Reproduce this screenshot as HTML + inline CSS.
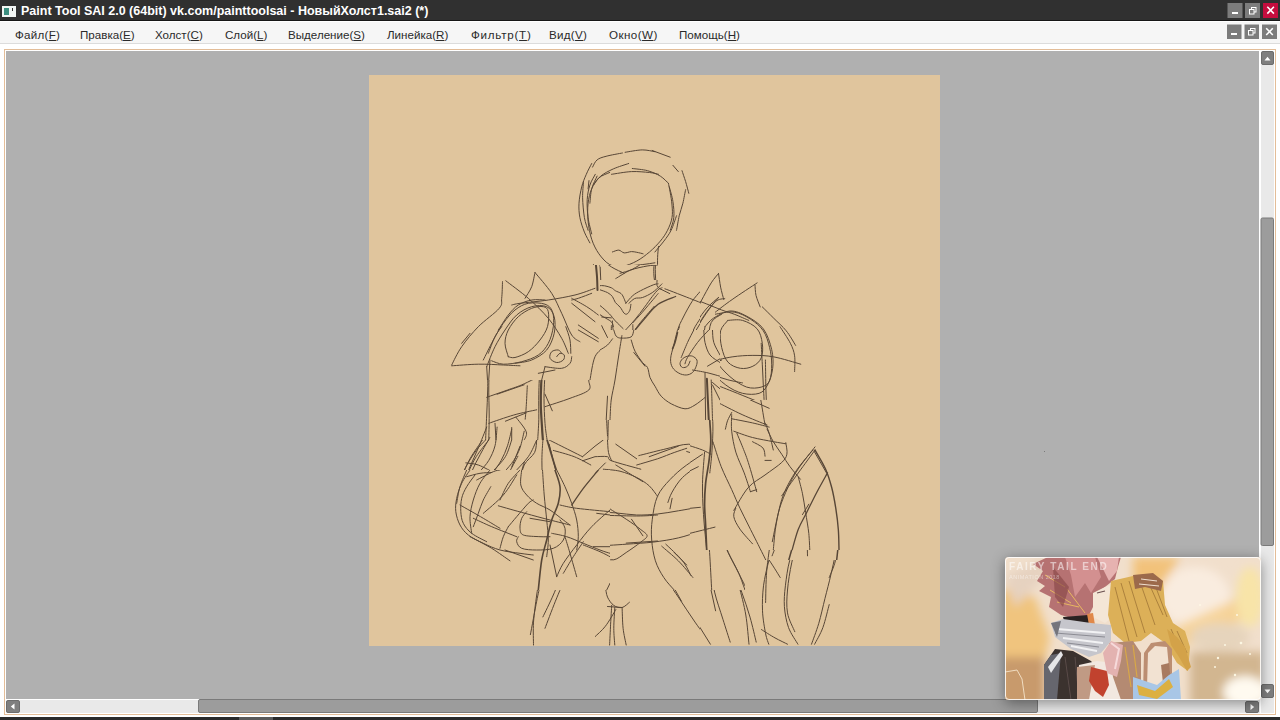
<!DOCTYPE html>
<html><head><meta charset="utf-8">
<style>
*{margin:0;padding:0;box-sizing:border-box}
html,body{width:1280px;height:720px;overflow:hidden;background:#fff;font-family:"Liberation Sans",sans-serif}
.abs{position:absolute}
#title{left:0;top:0;width:1280px;height:21px;background:#303030;border-bottom:1px solid #161616}
#title .t{left:21px;top:4px;font-size:12.5px;font-weight:bold;color:#fff;white-space:nowrap}
#icon{left:2px;top:6px;width:14px;height:11px;background:#f2f6f4}
#icon i{position:absolute;left:2px;top:2px;width:5px;height:7px;background:#3d8f80}
#icon b{position:absolute;left:10px;top:2px;width:1px;height:3px;background:#333}
.wb{width:15px;height:15px;background:#7c7c7c}
#menu{left:0;top:21px;width:1280px;height:23px;background:#f6f6f6;border-top:1px solid #fff;border-bottom:1px solid #dcdcdc}
.mi{top:6px;font-size:11.6px;color:#2a2a2a;white-space:nowrap}
.mi u{text-decoration:underline;text-underline-offset:1px}
#frame{left:4px;top:49px;width:1272px;height:666px;border:1px solid #e3bd98;background:#fff}
#view{left:6px;top:51px;width:1253px;height:648px;background:#b0b0b0}
#paper{left:369px;top:75px;width:571px;height:571px;background:#e0c59d}
#vtrack{left:1260px;top:51px;width:14px;height:662px;background:#e9e9e9;border-left:1px solid #fff}
#htrack{left:6px;top:699px;width:1254px;height:14px;background:#e9e9e9;border-top:1px solid #fff}
.sbtn{width:13px;height:14px;background:#7d7d7d;border:1px solid #6a6a6a;border-radius:2px}
.thumb{background:#9a9a9a;border:1px solid #7a7a7a;border-radius:2px}
#bottombar{left:0;top:717px;width:1280px;height:3px;background:#2a2a2a}
</style></head><body>
<div id="title" class="abs">
  <div id="icon" class="abs"><i></i><b></b></div>
  <div class="t abs">Paint Tool SAI 2.0 (64bit) vk.com/painttoolsai - НовыйХолст1.sai2 (*)</div>
</div>

<div id="menu" class="abs">
  <div class="mi abs" style="left:15px;letter-spacing:0.25px">Файл(<u>F</u>)</div>
  <div class="mi abs" style="left:80px">Правка(<u>E</u>)</div>
  <div class="mi abs" style="left:155px">Холст(<u>C</u>)</div>
  <div class="mi abs" style="left:225px">Слой(<u>L</u>)</div>
  <div class="mi abs" style="left:288px">Выделение(<u>S</u>)</div>
  <div class="mi abs" style="left:387px">Линейка(<u>R</u>)</div>
  <div class="mi abs" style="left:471px;letter-spacing:0.75px">Фильтр(<u>T</u>)</div>
  <div class="mi abs" style="left:549px;letter-spacing:0.3px">Вид(<u>V</u>)</div>
  <div class="mi abs" style="left:609px;letter-spacing:0.45px">Окно(<u>W</u>)</div>
  <div class="mi abs" style="left:679px">Помощь(<u>H</u>)</div>
</div>
<svg class="abs" style="left:0;top:0" width="1280" height="45">
  <rect x="1227.5" y="3" width="15" height="15" fill="#7c7c7c"/>
  <rect x="1232" y="12" width="6" height="2" fill="#fff"/>
  <rect x="1245" y="3" width="15" height="15" fill="#7c7c7c"/>
  <rect x="1251.5" y="7.5" width="4.5" height="4.5" fill="none" stroke="#fff" stroke-width="1"/>
  <rect x="1249.5" y="9.5" width="4.5" height="4.5" fill="#7c7c7c" stroke="#fff" stroke-width="1"/>
  <rect x="1263" y="3" width="15" height="15" fill="#c50d3e"/>
  <path d="M1267.3 6.8L1273.9 13.6M1273.9 6.8L1267.3 13.6" stroke="#fff" stroke-width="1.6"/>
  <rect x="1227" y="24.5" width="14.5" height="14.5" fill="#7c7c7c"/>
  <rect x="1231" y="33" width="6" height="2" fill="#fff"/>
  <rect x="1244.5" y="24.5" width="14.5" height="14.5" fill="#7c7c7c"/>
  <rect x="1250.5" y="28.5" width="4.5" height="4.5" fill="none" stroke="#fff" stroke-width="1"/>
  <rect x="1248.5" y="30.5" width="4.5" height="4.5" fill="#7c7c7c" stroke="#fff" stroke-width="1"/>
  <rect x="1262" y="24.5" width="15" height="14.5" fill="#7c7c7c"/>
  <path d="M1266.2 28.2L1272.8 35M1272.8 28.2L1266.2 35" stroke="#fff" stroke-width="1.6"/>
</svg>
<div id="frame" class="abs"></div>
<div id="view" class="abs"></div>
<div id="paper" class="abs"></div>
<div class="abs" style="left:1044px;top:451px;width:1px;height:1px;background:#7a7a7a"></div>
<svg class="abs" style="left:0;top:0" width="1280" height="720" viewBox="0 0 1280 720"><defs><mask id="c0" maskUnits="userSpaceOnUse" x="0" y="0" width="1280" height="720"><polygon fill="white" points="369,140 595,140 595,290 369,290"/><polygon fill="black" points="590,280 700,280 700,350 590,350"/><polygon fill="black" points="600,330 720,330 720,420 600,420"/><polygon fill="black" points="369,260 600,260 600,380 369,380"/><polygon fill="black" points="570,140 700,140 700,265 570,265"/><polygon fill="black" points="450,470 610,470 610,590 450,590"/></mask><mask id="c1" maskUnits="userSpaceOnUse" x="0" y="0" width="1280" height="720"><polygon fill="white" points="595,140 745,140 745,260 680,260 680,290 595,290"/><polygon fill="black" points="590,280 700,280 700,350 590,350"/><polygon fill="black" points="600,330 720,330 720,420 600,420"/><polygon fill="black" points="369,260 600,260 600,380 369,380"/><polygon fill="black" points="570,140 700,140 700,265 570,265"/><polygon fill="black" points="450,470 610,470 610,590 450,590"/></mask><mask id="c2" maskUnits="userSpaceOnUse" x="0" y="0" width="1280" height="720"><polygon fill="white" points="745,140 940,140 940,410 840,410 840,400 830,400 830,260 745,260"/><polygon fill="black" points="590,280 700,280 700,350 590,350"/><polygon fill="black" points="600,330 720,330 720,420 600,420"/><polygon fill="black" points="369,260 600,260 600,380 369,380"/><polygon fill="black" points="570,140 700,140 700,265 570,265"/><polygon fill="black" points="450,470 610,470 610,590 450,590"/></mask><mask id="c3" maskUnits="userSpaceOnUse" x="0" y="0" width="1280" height="720"><polygon fill="white" points="369,290 595,290 595,440 369,440"/><polygon fill="black" points="590,280 700,280 700,350 590,350"/><polygon fill="black" points="600,330 720,330 720,420 600,420"/><polygon fill="black" points="369,260 600,260 600,380 369,380"/><polygon fill="black" points="570,140 700,140 700,265 570,265"/><polygon fill="black" points="450,470 610,470 610,590 450,590"/></mask><mask id="c4" maskUnits="userSpaceOnUse" x="0" y="0" width="1280" height="720"><polygon fill="white" points="595,290 680,290 680,410 690,410 690,440 595,440"/><polygon fill="black" points="590,280 700,280 700,350 590,350"/><polygon fill="black" points="600,330 720,330 720,420 600,420"/><polygon fill="black" points="369,260 600,260 600,380 369,380"/><polygon fill="black" points="570,140 700,140 700,265 570,265"/><polygon fill="black" points="450,470 610,470 610,590 450,590"/></mask><mask id="c5" maskUnits="userSpaceOnUse" x="0" y="0" width="1280" height="720"><polygon fill="white" points="369,440 595,440 595,590 369,590"/><polygon fill="black" points="590,280 700,280 700,350 590,350"/><polygon fill="black" points="600,330 720,330 720,420 600,420"/><polygon fill="black" points="369,260 600,260 600,380 369,380"/><polygon fill="black" points="570,140 700,140 700,265 570,265"/><polygon fill="black" points="450,470 610,470 610,590 450,590"/></mask><mask id="c6" maskUnits="userSpaceOnUse" x="0" y="0" width="1280" height="720"><polygon fill="white" points="595,440 690,440 690,550 745,550 745,590 595,590"/><polygon fill="black" points="590,280 700,280 700,350 590,350"/><polygon fill="black" points="600,330 720,330 720,420 600,420"/><polygon fill="black" points="369,260 600,260 600,380 369,380"/><polygon fill="black" points="570,140 700,140 700,265 570,265"/><polygon fill="black" points="450,470 610,470 610,590 450,590"/></mask><mask id="c7" maskUnits="userSpaceOnUse" x="0" y="0" width="1280" height="720"><polygon fill="white" points="840,410 940,410 940,560 745,560 745,550 840,550"/><polygon fill="black" points="590,280 700,280 700,350 590,350"/><polygon fill="black" points="600,330 720,330 720,420 600,420"/><polygon fill="black" points="369,260 600,260 600,380 369,380"/><polygon fill="black" points="570,140 700,140 700,265 570,265"/><polygon fill="black" points="450,470 610,470 610,590 450,590"/></mask><mask id="c8" maskUnits="userSpaceOnUse" x="0" y="0" width="1280" height="720"><polygon fill="white" points="369,590 595,590 595,650 369,650"/><polygon fill="black" points="590,280 700,280 700,350 590,350"/><polygon fill="black" points="600,330 720,330 720,420 600,420"/><polygon fill="black" points="369,260 600,260 600,380 369,380"/><polygon fill="black" points="570,140 700,140 700,265 570,265"/><polygon fill="black" points="450,470 610,470 610,590 450,590"/></mask><mask id="c9" maskUnits="userSpaceOnUse" x="0" y="0" width="1280" height="720"><polygon fill="white" points="595,590 700,590 700,650 595,650"/><polygon fill="black" points="590,280 700,280 700,350 590,350"/><polygon fill="black" points="600,330 720,330 720,420 600,420"/><polygon fill="black" points="369,260 600,260 600,380 369,380"/><polygon fill="black" points="570,140 700,140 700,265 570,265"/><polygon fill="black" points="450,470 610,470 610,590 450,590"/></mask><mask id="c10" maskUnits="userSpaceOnUse" x="0" y="0" width="1280" height="720"><polygon fill="white" points="700,590 745,590 745,560 940,560 940,650 700,650"/><polygon fill="black" points="590,280 700,280 700,350 590,350"/><polygon fill="black" points="600,330 720,330 720,420 600,420"/><polygon fill="black" points="369,260 600,260 600,380 369,380"/><polygon fill="black" points="570,140 700,140 700,265 570,265"/><polygon fill="black" points="450,470 610,470 610,590 450,590"/></mask><mask id="c11" maskUnits="userSpaceOnUse" x="0" y="0" width="1280" height="720"><polygon fill="white" points="680,260 830,260 830,400 690,400 690,410 680,410"/><polygon fill="black" points="590,280 700,280 700,350 590,350"/><polygon fill="black" points="600,330 720,330 720,420 600,420"/><polygon fill="black" points="369,260 600,260 600,380 369,380"/><polygon fill="black" points="570,140 700,140 700,265 570,265"/><polygon fill="black" points="450,470 610,470 610,590 450,590"/></mask><mask id="c12" maskUnits="userSpaceOnUse" x="0" y="0" width="1280" height="720"><polygon fill="white" points="690,400 840,400 840,550 690,550"/><polygon fill="black" points="590,280 700,280 700,350 590,350"/><polygon fill="black" points="600,330 720,330 720,420 600,420"/><polygon fill="black" points="369,260 600,260 600,380 369,380"/><polygon fill="black" points="570,140 700,140 700,265 570,265"/><polygon fill="black" points="450,470 610,470 610,590 450,590"/></mask><mask id="c13" maskUnits="userSpaceOnUse" x="0" y="0" width="1280" height="720"><polygon fill="white" points="369,75 940,75 940,646 369,646"/><polygon fill="black" points="590,280 700,280 700,350 590,350"/><polygon fill="black" points="600,330 720,330 720,420 600,420"/><polygon fill="black" points="369,260 600,260 600,380 369,380"/><polygon fill="black" points="570,140 700,140 700,265 570,265"/><polygon fill="black" points="450,470 610,470 610,590 450,590"/></mask><mask id="c14" maskUnits="userSpaceOnUse" x="0" y="0" width="1280" height="720"><polygon fill="white" points="590,280 700,280 700,350 590,350"/><polygon fill="black" points="600,330 720,330 720,420 600,420"/><polygon fill="black" points="369,260 600,260 600,380 369,380"/><polygon fill="black" points="570,140 700,140 700,265 570,265"/><polygon fill="black" points="450,470 610,470 610,590 450,590"/></mask><mask id="c15" maskUnits="userSpaceOnUse" x="0" y="0" width="1280" height="720"><polygon fill="white" points="600,330 720,330 720,420 600,420"/><polygon fill="black" points="369,260 600,260 600,380 369,380"/><polygon fill="black" points="570,140 700,140 700,265 570,265"/><polygon fill="black" points="450,470 610,470 610,590 450,590"/></mask><mask id="c16" maskUnits="userSpaceOnUse" x="0" y="0" width="1280" height="720"><polygon fill="white" points="369,260 600,260 600,380 369,380"/><polygon fill="black" points="570,140 700,140 700,265 570,265"/><polygon fill="black" points="450,470 610,470 610,590 450,590"/></mask><mask id="c17" maskUnits="userSpaceOnUse" x="0" y="0" width="1280" height="720"><polygon fill="white" points="570,140 700,140 700,265 570,265"/><polygon fill="black" points="450,470 610,470 610,590 450,590"/></mask><mask id="c18" maskUnits="userSpaceOnUse" x="0" y="0" width="1280" height="720"><polygon fill="white" points="450,470 610,470 610,590 450,590"/></mask><clipPath id="paperclip"><rect x="369" y="75" width="571" height="571"/></clipPath></defs><g clip-path="url(#paperclip)" fill="none" stroke="#574636" stroke-linecap="round" stroke-linejoin="round"><g mask="url(#c0)"><path d="M591.9 164.0C591.0 164.8 588.2 166.6 586.7 169.2C585.1 171.8 583.7 175.4 582.5 179.6C581.3 183.8 580.0 189.3 579.4 194.2C578.8 199.0 578.6 203.9 578.8 208.8C578.9 213.6 579.3 218.8 580.4 223.3C581.6 227.8 583.9 232.4 585.6 235.8C587.4 239.3 589.3 242.1 590.8 244.2C592.4 246.3 594.3 247.6 595.0 248.3 M595.0 169.2C594.3 170.6 592.2 174.0 590.8 177.5C589.4 181.0 587.7 185.8 586.7 190.0C585.6 194.2 584.8 197.6 584.6 202.5C584.4 207.4 584.6 214.3 585.6 219.2C586.7 224.0 589.3 228.5 590.8 231.7C592.4 234.8 594.3 236.9 595.0 237.9 M588.8 179.6L587.7 187.9 M595.0 181.7C594.3 183.8 591.9 189.7 590.8 194.2C589.8 198.7 588.6 203.9 588.8 208.8C588.9 213.6 591.4 220.9 591.9 223.3 M502.9 281.2L503.3 290.0 M505.4 280.6L515.8 290.0 M534.2 271.7C533.9 273.0 533.1 276.5 532.5 279.6C531.9 282.6 530.8 288.3 530.4 290.0 M534.2 271.7C535.6 273.3 540.4 278.6 542.9 281.7C545.4 284.7 548.1 288.6 549.2 290.0" stroke-width="1.0"/><path d="M594.0 262.9C594.1 265.0 594.8 270.9 595.0 275.4C595.2 279.9 595.3 287.6 595.4 290.0" stroke-width="2.0"/></g><g mask="url(#c1)"><path d="M595.0 162.9C596.7 162.2 600.6 160.0 605.4 158.3C610.3 156.7 617.9 154.2 624.2 152.9C630.4 151.6 637.4 150.4 642.9 150.4C648.5 150.4 653.0 151.7 657.5 152.9C662.0 154.1 667.9 156.9 670.0 157.7 M672.5 165.0L678.3 171.2 M680.8 170.2C681.5 171.9 683.3 176.8 684.6 180.6C685.9 184.4 688.1 191.0 688.8 193.1 M685.6 190.0C685.1 192.1 683.5 198.3 682.5 202.5C681.5 206.7 680.4 210.5 679.4 215.0C678.3 219.5 676.8 227.2 676.2 229.6 M595.0 183.8C596.4 182.2 599.9 177.0 603.3 174.4C606.8 171.8 611.7 170.0 615.8 168.1C620.0 166.3 626.2 164.1 628.3 163.3 M607.5 174.4C611.7 173.5 624.2 169.3 632.5 169.2C640.8 169.0 653.3 172.6 657.5 173.3 M632.5 169.2C635.6 169.9 646.0 171.6 651.2 173.3C656.5 175.1 660.6 177.3 663.8 179.6C666.9 181.8 669.0 185.7 670.0 186.9 M667.9 183.8C668.4 185.5 670.2 190.0 671.0 194.2C671.9 198.3 673.0 203.9 673.1 208.8C673.3 213.6 673.1 218.8 672.1 223.3C671.0 227.8 669.3 231.7 666.9 235.8C664.4 240.0 661.1 244.2 657.5 248.3C653.9 252.5 649.2 257.4 645.0 260.8C640.8 264.3 636.7 267.1 632.5 269.2C628.3 271.2 622.1 272.6 620.0 273.3 M669.0 187.9C669.5 190.3 672.2 197.3 672.5 202.5C672.8 207.7 672.5 213.3 671.0 219.2C669.6 225.1 665.0 234.8 663.8 237.9 M595.0 250.4C596.0 251.8 598.5 256.0 601.2 258.8C604.0 261.5 607.8 264.7 611.7 267.1C615.5 269.5 622.1 272.3 624.2 273.3 M615.8 278.5C618.3 277.2 625.2 272.3 630.4 270.2C635.6 268.1 642.6 266.9 647.1 266.0C651.6 265.2 655.8 265.2 657.5 265.0 M611.7 252.5C612.4 252.2 614.1 250.6 615.8 250.4C617.6 250.2 620.3 250.9 622.1 251.5C623.8 252.0 624.5 253.5 626.2 253.5C628.0 253.5 629.7 251.5 632.5 251.5C635.3 251.5 641.2 253.2 642.9 253.5 M657.5 248.3C657.2 251.1 655.7 259.4 655.4 265.0C655.1 270.6 655.5 277.5 655.8 281.7C656.2 285.8 657.2 288.6 657.5 290.0 M654.4 256.7C654.3 259.4 653.6 268.5 653.8 273.3C653.9 278.2 655.1 283.8 655.4 285.8 M600.2 267.1L600.8 281.7 M703.3 290.0C706.1 287.2 716.9 273.3 720.0 273.3C723.1 273.3 721.7 287.2 722.1 290.0 M645.0 290.0L655.4 283.8 M595.0 285.8C596.4 285.7 600.6 284.1 603.3 284.8C606.1 285.5 610.3 289.1 611.7 290.0" stroke-width="1.0"/><path d="M597.1 260.8C596.9 263.3 596.0 270.6 596.0 275.4C596.0 280.3 596.9 287.6 597.1 290.0" stroke-width="2.5"/></g><g mask="url(#c2)"><path d="M745.0 291.2L757.5 282.5 M754.4 286.0C754.7 288.0 755.4 294.0 756.5 297.5C757.5 301.0 759.9 305.3 760.6 306.9 M762.7 306.9C765.0 309.1 772.3 316.4 776.2 320.4C780.2 324.4 783.5 326.7 786.7 330.8C789.8 335.0 793.6 343.0 795.0 345.4 M780.4 326.7C781.8 329.1 786.5 336.7 788.8 341.2C791.0 345.8 792.9 348.7 794.0 353.8C795.0 358.8 794.8 368.5 795.0 371.5 M745.0 316.2C746.7 318.0 752.6 322.8 755.4 326.7C758.2 330.5 760.6 335.0 761.7 339.2C762.7 343.3 762.4 348.2 761.7 351.7C761.0 355.1 759.2 357.9 757.5 360.0C755.8 362.1 753.3 363.3 751.2 364.2C749.2 365.0 746.0 365.0 745.0 365.2 M745.0 320.4C747.1 322.2 754.0 327.0 757.5 330.8C761.0 334.7 763.6 338.8 765.8 343.3C768.1 347.8 770.3 352.7 771.0 357.9C771.7 363.1 771.2 369.4 770.0 374.6C768.8 379.8 766.5 385.7 763.8 389.2C761.0 392.6 756.5 394.0 753.3 395.4C750.2 396.8 746.4 397.2 745.0 397.5 M745.0 328.8C747.4 330.5 755.8 334.7 759.6 339.2C763.4 343.7 765.8 351.0 767.9 355.8C770.0 360.7 771.7 363.5 772.1 368.3C772.4 373.2 771.7 380.8 770.0 385.0C768.3 389.2 763.1 391.9 761.7 393.3 M745.0 355.8C748.5 355.8 758.9 355.1 765.8 355.8C772.8 356.5 780.8 358.6 786.7 360.0C792.6 361.4 798.8 363.5 801.2 364.2 M761.7 343.3C761.8 348.5 762.4 363.5 762.7 374.6C763.1 385.7 763.6 404.1 763.8 410.0 M765.8 353.8L765.8 395.4 M745.0 385.0C747.1 386.4 754.0 390.6 757.5 393.3C761.0 396.1 764.4 400.3 765.8 401.7 M745.0 397.5L767.9 407.9" stroke-width="1.0"/></g><g mask="url(#c3)"><path d="M501.2 290.0C501.2 292.1 501.4 299.4 500.8 302.5C500.3 305.6 500.5 306.3 498.1 308.8C495.8 311.2 491.0 313.3 486.7 317.1C482.3 320.9 476.6 326.1 472.1 331.7C467.6 337.2 462.9 344.9 459.6 350.4C456.3 356.0 453.5 362.6 452.3 365.0 M482.5 319.2L470.0 333.8 M452.3 366.0C455.2 365.8 463.6 365.0 470.0 364.6C476.4 364.1 484.6 363.3 490.8 363.3C497.1 363.4 502.6 364.5 507.5 365.0C512.4 365.5 517.9 365.9 520.0 366.0 M515.8 290.0C518.6 292.1 527.6 298.0 532.5 302.5C537.4 307.0 540.8 311.9 545.0 317.1C549.2 322.3 554.0 328.5 557.5 333.8C561.0 339.0 563.8 344.5 565.8 348.3C567.9 352.2 569.3 355.3 570.0 356.7 M549.2 290.0C551.2 292.8 557.8 300.8 561.7 306.7C565.5 312.6 569.0 319.5 572.1 325.4C575.2 331.3 579.0 339.3 580.4 342.1 M530.4 290.0L526.2 298.3 M595.0 290.0C590.8 291.0 578.3 294.5 570.0 296.2C561.7 298.0 551.9 299.5 545.0 300.4C538.1 301.3 533.9 300.8 528.3 301.5C522.8 302.2 514.4 304.1 511.7 304.6 M507.5 350.4C507.2 348.0 504.7 340.7 505.4 335.8C506.1 331.0 508.5 325.4 511.7 321.2C514.8 317.1 519.7 312.9 524.2 310.8C528.7 308.8 534.8 307.7 538.8 308.8C542.7 309.8 546.4 313.6 548.1 317.1C549.9 320.6 550.0 325.1 549.2 329.6C548.3 334.1 546.4 340.0 542.9 344.2C539.4 348.3 533.2 352.3 528.3 354.6C523.5 356.8 517.2 358.4 513.8 357.7C510.3 357.0 508.5 351.6 507.5 350.4 M490.8 354.6C491.5 352.2 492.6 345.2 495.0 340.0C497.4 334.8 501.2 328.4 505.4 323.3C509.6 318.3 514.8 312.7 520.0 309.8C525.2 306.8 531.8 306.0 536.7 305.6C541.5 305.3 546.2 305.5 549.2 307.7C552.1 310.0 553.7 314.5 554.4 319.2C555.1 323.9 554.9 330.6 553.3 335.8C551.8 341.0 548.5 346.6 545.0 350.4C541.5 354.2 537.0 356.8 532.5 358.8C528.0 360.7 522.8 361.7 517.9 361.9C513.1 362.0 507.2 361.0 503.3 359.8C499.5 358.6 496.4 355.5 495.0 354.6 M563.8 356.7C563.2 355.6 562.4 351.5 560.6 350.4C558.9 349.4 555.2 349.4 553.3 350.4C551.4 351.5 548.8 354.8 549.2 356.7C549.5 358.6 553.2 361.2 555.4 361.9C557.7 362.6 561.0 362.0 562.7 360.8C564.4 359.6 566.0 356.0 565.8 354.6C565.7 353.2 562.4 352.8 561.7 352.5 M542.9 371.2C544.7 371.6 549.5 373.2 553.3 373.3C557.2 373.5 562.7 373.7 565.8 372.3C569.0 370.9 570.9 367.6 572.1 365.0C573.3 362.4 573.0 358.1 573.1 356.7 M487.7 365.0C487.7 369.2 487.9 381.7 487.7 390.0C487.5 398.3 487.0 406.7 486.7 415.0C486.3 423.3 485.8 435.8 485.6 440.0 M489.8 360.8C489.6 365.0 488.9 376.8 488.8 385.8C488.6 394.9 489.2 406.0 489.2 415.0C489.2 424.0 488.8 435.8 488.8 440.0 M492.9 348.3C492.2 350.1 489.6 354.6 488.8 358.8C487.9 362.9 487.9 370.9 487.7 373.3 M485.6 360.8C487.5 357.4 493.8 346.6 497.1 340.0C500.4 333.4 502.3 327.5 505.4 321.2C508.5 315.0 512.4 306.3 515.8 302.5C519.3 298.7 524.5 299.0 526.2 298.3 M486.7 397.3C490.1 396.1 501.2 392.3 507.5 390.0C513.8 387.7 516.5 387.2 524.2 383.8C531.8 380.3 548.5 371.6 553.3 369.2 M497.1 394.2L524.2 384.8 M488.8 423.3C492.9 421.9 505.8 417.3 513.8 415.0C521.7 412.7 532.8 410.7 536.7 409.8 M505.4 421.2L526.2 412.9 M527.3 385.8C527.1 389.3 526.6 401.1 526.2 406.7C525.9 412.2 525.4 417.1 525.2 419.2 M539.8 369.2C539.6 373.3 538.9 385.8 538.8 394.2C538.6 402.5 538.9 411.5 538.8 419.2C538.6 426.8 537.9 436.5 537.7 440.0 M545.0 373.3C544.8 377.5 544.0 390.0 544.0 398.3C544.0 406.7 544.5 416.4 545.0 423.3C545.5 430.3 546.7 437.2 547.1 440.0 M595.0 358.8C594.3 359.8 591.9 361.5 590.8 365.0C589.8 368.5 589.1 375.4 588.8 379.6C588.4 383.8 591.9 386.9 588.8 390.0C585.6 393.1 577.3 395.6 570.0 398.3C562.7 401.1 549.2 405.3 545.0 406.7 M545.0 394.2L552.3 410.8 M515.8 417.1C517.6 419.5 524.9 427.8 526.2 431.7C527.6 435.5 524.5 438.6 524.2 440.0 M495.0 423.3L496.0 440.0 M511.7 427.5L511.7 440.0 M572.1 298.3L595.0 308.8 M570.0 302.5C572.8 304.2 582.5 310.5 586.7 312.9C590.8 315.3 593.6 316.4 595.0 317.1 M578.3 325.4L595.0 335.8 M578.3 333.8L595.0 342.1 M565.8 325.4C566.5 328.2 569.3 337.6 570.0 342.1C570.7 346.6 570.0 350.8 570.0 352.5" stroke-width="1.0"/><path d="M542.9 365.0C542.6 368.1 541.6 377.2 541.2 383.8C540.9 390.3 540.7 397.6 540.8 404.6C540.9 411.5 541.5 419.5 541.9 425.4C542.2 431.3 542.7 437.6 542.9 440.0" stroke-width="2.2"/></g><g mask="url(#c4)"><path d="M595.0 302.5C596.4 303.9 600.6 308.4 603.3 310.8C606.1 313.3 609.8 314.3 611.7 317.1C613.6 319.9 613.8 324.4 614.8 327.5C615.8 330.6 615.3 334.3 617.9 335.8C620.5 337.4 627.8 337.9 630.4 336.9C633.0 335.8 633.0 330.8 633.5 329.6 M595.0 296.2C597.1 297.6 603.7 301.1 607.5 304.6C611.3 308.1 614.8 312.9 617.9 317.1C621.0 321.2 624.9 327.5 626.2 329.6 M615.8 290.0C616.5 292.8 618.3 303.2 620.0 306.7C621.7 310.1 622.1 313.6 626.2 310.8C630.4 308.1 641.9 293.5 645.0 290.0 M624.2 330.6C626.2 329.1 631.8 324.5 636.7 321.2C641.5 318.0 647.1 314.8 653.3 310.8C659.6 306.8 670.7 299.5 674.2 297.3 M634.6 323.3C637.0 321.6 644.3 316.4 649.2 312.9C654.0 309.4 661.3 304.2 663.8 302.5 M622.1 335.8C621.6 338.6 620.2 346.2 619.0 352.5C617.7 358.8 616.2 366.4 614.8 373.3C613.4 380.3 611.7 387.2 610.6 394.2C609.6 401.1 609.0 407.4 608.5 415.0C608.1 422.6 608.0 435.8 607.9 440.0 M606.5 394.2C606.5 397.6 606.3 408.1 606.5 415.0C606.6 421.9 607.3 432.4 607.5 435.8 M632.5 337.9C633.2 340.3 634.6 348.3 636.7 352.5C638.8 356.7 642.6 358.4 645.0 362.9C647.4 367.4 648.8 374.4 651.2 379.6C653.7 384.8 656.5 390.3 659.6 394.2C662.7 398.0 665.8 400.2 670.0 402.5C674.2 404.8 680.1 407.2 684.6 407.7C689.1 408.2 694.0 407.2 697.1 405.6C700.2 404.1 702.3 399.5 703.3 398.3 M711.7 290.0C708.9 292.1 699.9 297.3 695.0 302.5C690.1 307.7 685.6 314.7 682.5 321.2C679.4 327.8 678.0 336.2 676.2 342.1C674.5 348.0 672.4 352.2 672.1 356.7C671.7 361.2 672.4 366.2 674.2 369.2C675.9 372.1 679.4 373.9 682.5 374.4C685.6 374.9 690.5 374.2 692.9 372.3C695.3 370.4 697.1 365.5 697.1 362.9C697.1 360.3 695.0 357.5 692.9 356.7C690.8 355.8 686.7 356.7 684.6 357.7C682.5 358.8 680.8 361.4 680.4 362.9C680.1 364.5 682.2 366.4 682.5 367.1 M686.7 290.0C685.6 292.8 682.5 299.7 680.4 306.7C678.3 313.6 675.4 324.7 674.2 331.7C673.0 338.6 673.3 345.6 673.1 348.3 M745.0 311.9C741.5 312.0 729.7 311.0 724.2 312.9C718.6 314.8 715.0 319.5 711.7 323.3C708.4 327.2 705.4 331.0 704.4 335.8C703.3 340.7 703.9 346.9 705.4 352.5C707.0 358.1 709.9 364.3 713.8 369.2C717.6 374.0 723.1 378.5 728.3 381.7C733.5 384.8 742.2 386.9 745.0 387.9 M745.0 321.2C742.2 320.6 732.8 316.0 728.3 317.1C723.8 318.1 720.3 323.3 717.9 327.5C715.5 331.7 713.8 336.5 713.8 342.1C713.8 347.6 715.1 355.3 717.9 360.8C720.7 366.4 725.9 371.9 730.4 375.4C734.9 378.9 742.6 380.6 745.0 381.7 M745.0 331.7C742.9 330.6 736.3 324.7 732.5 325.4C728.7 326.1 724.2 331.7 722.1 335.8C720.0 340.0 719.3 345.6 720.0 350.4C720.7 355.3 722.1 360.8 726.2 365.0C730.4 369.2 741.9 373.7 745.0 375.4 M665.8 290.0C669.7 291.0 681.1 294.2 688.8 296.2C696.4 298.3 704.4 300.4 711.7 302.5C719.0 304.6 726.9 307.0 732.5 308.8C738.1 310.5 742.9 312.2 745.0 312.9 M699.2 340.0C701.2 336.9 706.5 327.2 711.7 321.2C716.9 315.3 724.9 309.1 730.4 304.6C736.0 300.1 742.6 295.9 745.0 294.2 M708.5 362.9C711.1 361.9 718.1 358.1 724.2 356.7C730.2 355.3 741.5 354.9 745.0 354.6 M711.7 383.8C712.0 389.0 713.4 405.6 713.8 415.0C714.1 424.4 713.8 435.8 713.8 440.0 M703.3 373.3L745.0 381.7 M715.8 383.8L720.0 398.3 M717.9 402.5L745.0 415.0 M728.3 412.9L724.2 440.0 M732.5 423.3L745.0 429.6 M601.2 327.5L607.5 340.0 M595.0 356.7C596.4 354.6 600.6 347.3 603.3 344.2C606.1 341.0 610.3 339.0 611.7 337.9" stroke-width="1.0"/><path d="M707.5 379.6C707.7 382.7 708.2 391.7 708.5 398.3C708.9 404.9 709.1 412.2 709.6 419.2C710.1 426.1 711.3 436.5 711.7 440.0" stroke-width="2.2"/></g><g mask="url(#c5)"><path d="M485.6 440.0C484.1 441.7 479.5 445.9 476.2 450.4C473.0 454.9 468.8 461.2 465.8 467.1C462.9 473.0 460.3 479.9 458.5 485.8C456.8 491.7 455.6 496.9 455.4 502.5C455.2 508.1 455.8 514.3 457.5 519.2C459.2 524.0 462.0 527.8 465.8 531.7C469.7 535.5 475.2 539.3 480.4 542.1C485.6 544.9 491.5 546.9 497.1 548.3C502.6 549.7 507.8 549.9 513.8 550.4C519.7 550.9 529.4 551.3 532.5 551.5 M482.5 440.0C480.4 443.1 473.5 452.5 470.0 458.8C466.5 465.0 463.8 471.6 461.7 477.5C459.6 483.4 458.2 491.4 457.5 494.2 M488.8 440.0C486.7 442.8 479.7 451.1 476.2 456.7C472.8 462.2 470.3 467.8 467.9 473.3C465.5 478.9 463.1 484.4 461.7 490.0C460.3 495.6 459.4 501.1 459.6 506.7C459.8 512.2 460.6 518.5 462.7 523.3C464.8 528.2 470.5 533.8 472.1 535.8 M465.8 462.9C467.9 463.3 473.5 463.3 478.3 465.0C483.2 466.7 492.2 471.9 495.0 473.3 M465.8 473.3C465.1 475.4 462.5 481.0 461.7 485.8C460.8 490.7 459.9 496.9 460.6 502.5C461.3 508.1 465.0 516.4 465.8 519.2 M511.7 440.0C510.6 442.8 508.5 451.5 505.4 456.7C502.3 461.9 495.0 468.8 492.9 471.2 M536.7 440.0C535.3 442.8 532.2 451.1 528.3 456.7C524.5 462.2 518.3 467.8 513.8 473.3C509.2 478.9 506.1 483.4 501.2 490.0C496.4 496.6 487.4 509.1 484.6 512.9 M520.0 446.2L511.7 467.1 M542.9 440.0C542.7 443.5 541.9 452.2 541.9 460.8C541.9 469.5 542.4 481.7 542.9 492.1C543.4 502.5 544.3 514.0 545.0 523.3C545.7 532.7 546.7 544.2 547.1 548.3 M536.7 440.0C536.3 442.1 536.7 448.3 534.6 452.5C532.5 456.7 526.4 460.1 524.2 465.0C521.9 469.9 521.0 477.2 521.0 481.7C521.0 486.2 521.9 489.0 524.2 492.1C526.4 495.2 530.8 497.6 534.6 500.4C538.4 503.2 542.6 505.6 547.1 508.8C551.6 511.9 557.8 516.4 561.7 519.2C565.5 521.9 568.6 524.4 570.0 525.4 M549.2 444.2C550.6 449.7 555.4 469.5 557.5 477.5C559.6 485.5 561.0 489.7 561.7 492.1 M549.2 440.0C552.6 441.7 564.4 447.6 570.0 450.4C575.6 453.2 580.4 455.6 582.5 456.7 M582.5 456.7L595.0 446.2 M553.3 450.4C556.8 451.5 567.9 454.2 574.2 456.7C580.4 459.1 588.1 463.6 590.8 465.0 M582.5 460.8L595.0 456.7 M497.1 505.6C500.6 506.5 511.0 508.9 517.9 510.8C524.9 512.7 532.8 515.3 538.8 517.1C544.7 518.8 548.1 519.9 553.3 521.2C558.5 522.6 567.2 524.7 570.0 525.4 M460.6 505.6C463.2 506.8 469.5 509.1 476.2 512.9C483.0 516.7 497.1 525.9 501.2 528.5 M472.1 518.1C474.5 519.0 480.8 520.7 486.7 523.3C492.6 525.9 504.0 532.0 507.5 533.8 M595.0 473.3C592.9 475.4 586.3 481.0 582.5 485.8C578.7 490.7 573.8 499.7 572.1 502.5 M559.6 504.6C562.7 505.3 572.4 507.7 578.3 508.8C584.2 509.8 592.2 510.5 595.0 510.8 M517.9 537.9C517.6 538.6 514.8 540.3 515.8 542.1C516.9 543.8 520.7 546.9 524.2 548.3C527.6 549.7 531.8 550.4 536.7 550.4C541.5 550.4 548.8 549.7 553.3 548.3C557.8 546.9 562.4 545.2 563.8 542.1C565.1 539.0 563.4 532.7 561.7 529.6C559.9 526.5 554.7 524.4 553.3 523.3 M522.1 519.2C521.7 520.6 519.7 525.1 520.0 527.5C520.3 529.9 521.4 532.0 524.2 533.8C526.9 535.5 532.5 537.2 536.7 537.9C540.8 538.6 545.0 537.6 549.2 537.9C553.3 538.3 559.6 539.7 561.7 540.0 M507.5 527.5C506.8 529.2 504.4 534.4 503.3 537.9C502.3 541.4 501.6 546.6 501.2 548.3 M505.4 531.7C508.5 529.6 519.7 524.0 524.2 519.2C528.7 514.3 531.1 505.3 532.5 502.5 M561.7 523.3C562.7 526.8 566.2 537.2 567.9 544.2C569.7 551.1 570.7 559.4 572.1 565.0C573.5 570.6 575.6 575.4 576.2 577.5 M547.1 537.9C548.1 541.0 551.6 550.4 553.3 556.7C555.1 562.9 556.8 572.3 557.5 575.4 M595.0 523.3C592.6 526.1 585.3 533.8 580.4 540.0C575.6 546.2 569.7 554.6 565.8 560.8C562.0 567.1 558.9 574.7 557.5 577.5 M595.0 529.6C592.9 532.0 586.7 538.3 582.5 544.2C578.3 550.1 572.1 561.5 570.0 565.0 M474.2 531.7C477.3 533.4 487.0 537.2 492.9 542.1C498.8 546.9 506.8 557.7 509.6 560.8 M497.1 552.5L532.5 559.8 M540.8 550.4C540.5 552.8 539.3 558.4 538.8 565.0C538.2 571.6 537.9 585.8 537.7 590.0 M561.7 533.8C564.4 534.8 572.8 538.3 578.3 540.0C583.9 541.7 592.2 543.5 595.0 544.2 M549.2 535.8C553.3 537.6 566.5 544.2 574.2 546.2C581.8 548.3 591.5 548.0 595.0 548.3" stroke-width="1.0"/><path d="M547.1 440.0C548.1 443.5 551.2 453.9 553.3 460.8C555.4 467.8 558.2 475.4 559.6 481.7C561.0 487.9 562.0 493.1 561.7 498.3C561.3 503.5 559.2 507.0 557.5 512.9C555.8 518.8 553.0 526.8 551.2 533.8C549.5 540.7 548.5 547.6 547.1 554.6C545.7 561.5 544.3 569.5 542.9 575.4C541.5 581.3 539.4 587.6 538.8 590.0" stroke-width="1.8"/></g><g mask="url(#c6)"><path d="M607.5 440.0C607.7 442.1 607.8 449.0 608.5 452.5C609.2 456.0 611.1 459.4 611.7 460.8 M595.0 446.2L603.3 440.0 M615.8 444.2L636.7 458.8 M595.0 456.7C597.1 456.7 604.7 456.0 607.5 456.7C610.3 457.4 606.1 458.8 611.7 460.8C617.2 462.9 636.0 467.8 640.8 469.2 M595.0 473.3L605.4 462.9 M603.3 469.2C606.1 469.5 614.4 469.9 620.0 471.2C625.6 472.6 631.8 475.1 636.7 477.5C641.5 479.9 645.7 482.7 649.2 485.8C652.6 489.0 656.1 494.5 657.5 496.2 M615.8 465.0C618.6 466.7 628.0 472.6 632.5 475.4C637.0 478.2 641.2 480.6 642.9 481.7 M638.8 455.6C642.9 454.6 655.4 451.3 663.8 449.4C672.1 447.5 682.2 444.0 688.8 444.2C695.3 444.3 699.5 448.3 703.3 450.4C707.2 452.5 710.3 455.6 711.7 456.7 M636.7 465.0C640.1 464.0 651.2 460.8 657.5 458.8C663.8 456.7 669.3 454.2 674.2 452.5C679.0 450.8 684.6 449.0 686.7 448.3 M649.2 456.7L678.3 446.2 M686.7 451.5L703.3 456.7 M707.5 452.5C704.0 454.6 692.9 460.5 686.7 465.0C680.4 469.5 674.9 474.4 670.0 479.6C665.1 484.8 660.5 489.7 657.5 496.2C654.5 502.8 653.3 511.9 652.3 519.2C651.3 526.5 651.1 533.1 651.7 540.0C652.2 546.9 653.4 554.6 655.4 560.8C657.4 567.1 660.6 572.6 663.8 577.5C666.9 582.4 672.4 587.9 674.2 590.0 M699.2 465.0C696.4 467.1 687.0 473.0 682.5 477.5C678.0 482.0 674.5 487.9 672.1 492.1C669.7 496.2 668.6 500.8 667.9 502.5 M672.1 498.3L670.0 508.8 M595.0 511.9C598.5 512.0 608.9 512.4 615.8 512.9C622.8 513.4 629.7 514.8 636.7 515.0C643.6 515.2 650.6 514.7 657.5 514.0C664.4 513.3 671.4 512.0 678.3 510.8C685.3 509.7 695.7 507.7 699.2 507.1 M595.0 515.0C601.9 515.2 626.2 516.0 636.7 516.0C647.1 516.0 654.0 515.2 657.5 515.0 M595.0 546.2C600.2 545.9 616.5 544.9 626.2 544.2C636.0 543.5 644.7 543.1 653.3 542.1C662.0 541.0 670.7 539.7 678.3 537.9C686.0 536.2 692.9 533.4 699.2 531.7C705.4 529.9 713.1 528.2 715.8 527.5 M626.2 543.1L657.5 541.0 M609.6 508.8C612.4 510.5 621.0 515.7 626.2 519.2C631.5 522.6 637.4 526.8 640.8 529.6C644.3 532.4 647.1 533.8 647.1 535.8C647.1 537.9 644.3 539.3 640.8 542.1C637.4 544.9 630.8 549.5 626.2 552.5C621.7 555.5 617.9 559.1 613.8 559.8C609.6 560.5 604.4 557.9 601.2 556.7C598.1 555.5 596.0 553.2 595.0 552.5 M609.6 508.8C608.2 510.5 603.7 516.4 601.2 519.2C598.8 521.9 596.0 524.4 595.0 525.4 M631.5 519.2L642.9 535.8 M595.0 549.4L609.6 553.5 M661.7 546.2C664.4 548.7 673.1 555.6 678.3 560.8C683.5 566.0 690.5 574.7 692.9 577.5 M665.8 544.2C668.6 546.9 678.3 555.6 682.5 560.8C686.7 566.0 689.4 573.0 690.8 575.4 M674.2 552.5L686.7 565.0 M711.7 440.0C710.6 443.5 706.8 453.9 705.4 460.8C704.0 467.8 703.5 474.7 703.3 481.7C703.2 488.6 703.7 494.9 704.4 502.5C705.1 510.1 706.6 519.2 707.5 527.5C708.4 535.8 708.9 542.1 709.6 552.5C710.3 562.9 711.3 583.8 711.7 590.0 M713.8 440.0C713.4 442.8 712.2 450.4 711.7 456.7C711.1 462.9 711.3 471.2 710.6 477.5C709.9 483.8 707.3 488.3 707.5 494.2C707.7 500.1 709.6 507.0 711.7 512.9C713.8 518.8 717.6 523.7 720.0 529.6C722.4 535.5 723.8 542.4 726.2 548.3C728.7 554.2 731.5 558.8 734.6 565.0C737.7 571.2 743.3 582.4 745.0 585.8 M709.6 452.5L711.7 473.3 M715.8 460.8C717.2 465.0 721.7 478.9 724.2 485.8C726.6 492.8 728.0 498.0 730.4 502.5C732.8 507.0 737.4 511.2 738.8 512.9 M730.4 440.0C730.8 442.1 730.8 448.3 732.5 452.5C734.2 456.7 738.8 461.9 740.8 465.0C742.9 468.1 744.3 470.2 745.0 471.2 M738.8 440.0L745.0 448.3 M745.0 500.4C744.0 501.5 740.5 504.6 738.8 506.7C737.0 508.8 734.9 510.1 734.6 512.9C734.2 515.7 734.9 520.2 736.7 523.3C738.4 526.5 743.6 530.3 745.0 531.7 M720.0 527.5C721.4 531.7 725.2 544.9 728.3 552.5C731.5 560.1 736.0 567.1 738.8 573.3C741.5 579.6 744.0 587.2 745.0 590.0 M717.9 440.0C718.3 443.5 718.3 453.2 720.0 460.8C721.7 468.5 724.9 477.8 728.3 485.8C731.8 493.8 738.8 504.9 740.8 508.8" stroke-width="1.0"/></g><g mask="url(#c7)"><path d="M762.7 410.0C763.1 412.1 763.6 418.3 764.8 422.5C766.0 426.7 768.1 431.2 770.0 435.0C771.9 438.8 773.8 441.6 776.2 445.4C778.7 449.2 781.8 454.1 784.6 457.9C787.4 461.7 790.1 464.9 792.9 468.3C795.7 471.8 799.9 477.0 801.2 478.8 M745.0 418.3C747.1 419.0 753.3 420.8 757.5 422.5C761.7 424.2 767.9 427.7 770.0 428.8 M745.0 435.0C748.5 435.7 758.9 437.8 765.8 439.2C772.8 440.6 783.2 442.6 786.7 443.3 M745.0 416.2L767.9 426.7 M786.7 443.3C786.8 445.4 788.4 452.7 787.7 455.8C787.0 459.0 785.5 459.3 782.5 462.1C779.5 464.9 774.2 468.7 770.0 472.5C765.8 476.3 761.0 481.9 757.5 485.0C754.0 488.1 751.2 489.9 749.2 491.2C747.1 492.6 745.7 493.0 745.0 493.3 M753.3 441.2C755.1 442.3 761.8 445.1 763.8 447.5C765.7 449.9 764.6 454.4 764.8 455.8 M764.8 460.0L772.1 460.0 M745.0 451.7C746.0 455.1 749.2 465.6 751.2 472.5C753.3 479.4 756.5 489.9 757.5 493.3 M814.8 447.5C812.5 449.9 805.6 456.2 801.2 462.1C796.9 468.0 792.2 476.0 788.8 482.9C785.3 489.9 782.8 496.5 780.4 503.8C778.0 511.0 775.9 519.7 774.2 526.7C772.4 533.6 771.0 539.9 770.0 545.4C769.0 551.0 768.3 557.6 767.9 560.0 M811.7 451.7C809.2 454.8 801.6 463.8 797.1 470.4C792.6 477.0 787.7 484.0 784.6 491.2C781.5 498.5 780.4 505.5 778.3 514.2C776.2 522.8 773.1 538.5 772.1 543.3 M799.2 474.6C799.9 478.4 802.1 490.2 803.3 497.5C804.5 504.8 805.8 508.6 806.5 518.3C807.2 528.1 807.3 549.6 807.5 555.8 M745.0 518.3C746.4 521.1 750.6 529.4 753.3 535.0C756.1 540.6 759.6 547.5 761.7 551.7C763.8 555.8 765.1 558.6 765.8 560.0 M784.6 518.3C783.5 521.8 780.4 532.9 778.3 539.2C776.2 545.4 773.1 553.1 772.1 555.8" stroke-width="1.0"/><path d="M814.8 451.7C816.4 453.8 821.2 459.0 824.2 464.2C827.1 469.4 830.4 476.7 832.5 482.9C834.6 489.2 835.6 495.1 836.7 501.7C837.7 508.3 838.5 515.6 838.8 522.5C839.0 529.4 838.7 537.1 838.3 543.3C838.0 549.6 836.9 557.2 836.7 560.0 M826.2 474.6C824.2 478.4 817.6 490.2 813.8 497.5C809.9 504.8 806.5 511.4 803.3 518.3C800.2 525.3 797.4 532.2 795.0 539.2C792.6 546.1 789.8 556.5 788.8 560.0" stroke-width="1.5"/></g><g mask="url(#c8)"><path d="M540.8 570.0C540.1 574.2 537.9 586.3 536.7 595.0C535.5 603.7 534.1 613.8 533.5 622.1C533.0 630.4 533.5 641.2 533.5 645.0 M530.4 634.6C531.5 629.0 535.1 609.2 536.7 601.2C538.2 593.3 539.3 589.1 539.8 586.7 M561.7 574.2C560.3 577.6 556.5 587.9 553.3 595.0C550.2 602.1 544.7 613.2 542.9 616.9 M565.8 576.2C564.1 580.4 558.9 592.6 555.4 601.2C551.9 609.9 546.7 623.8 545.0 628.3" stroke-width="1.0"/></g><g mask="url(#c9)"><path d="M605.4 586.7C605.8 588.4 606.1 594.0 607.5 597.1C608.9 600.2 611.3 603.7 613.8 605.4C616.2 607.2 619.5 608.0 622.1 607.5C624.7 607.0 628.2 603.2 629.4 602.3 M611.7 605.4C611.5 608.5 611.0 617.6 610.6 624.2C610.3 630.8 609.8 641.5 609.6 645.0 M614.8 607.5C614.6 611.0 613.8 622.1 613.8 628.3C613.8 634.6 614.6 642.2 614.8 645.0 M622.1 607.5C622.3 611.0 622.4 622.1 623.1 628.3C623.8 634.6 625.7 642.2 626.2 645.0 M615.8 609.6C614.1 612.4 608.9 621.7 605.4 626.2C601.9 630.8 596.7 634.9 595.0 636.7 M607.5 606.5L622.1 607.5 M659.6 570.0C662.7 574.5 672.4 588.4 678.3 597.1C684.2 605.8 689.4 614.1 695.0 622.1C700.6 630.1 708.9 641.2 711.7 645.0 M672.1 584.6L681.5 601.2 M709.6 576.2C711.3 582.2 716.5 600.6 720.0 611.7C723.5 622.8 728.7 637.7 730.4 642.9 M708.5 578.3L714.8 609.6" stroke-width="1.0"/></g><g mask="url(#c10)"><path d="M706.2 540.0C706.9 544.2 709.0 556.3 710.4 565.0C711.8 573.7 712.5 583.1 714.6 592.1C716.7 601.1 720.3 610.8 722.9 619.2C725.5 627.5 729.0 638.3 730.2 642.1 M708.3 577.5L715.6 610.8 M720.8 540.0C722.6 544.2 727.8 556.3 731.2 565.0C734.7 573.7 738.5 583.4 741.7 592.1C744.8 600.8 747.6 608.8 750.0 617.1C752.4 625.4 755.2 637.9 756.2 642.1 M722.9 540.0C725.0 543.8 732.1 556.7 735.4 562.9C738.7 569.2 741.5 575.1 742.7 577.5 M739.6 587.9C740.6 592.4 744.3 605.6 745.8 615.0C747.4 624.4 748.4 639.3 749.0 644.2 M752.1 540.0C754.5 542.8 762.0 550.4 766.7 556.7C771.4 562.9 778.0 574.0 780.2 577.5 M758.3 540.0L770.8 556.7 M775.0 540.0C774.0 543.5 770.7 553.2 768.8 560.8C766.8 568.5 764.6 577.5 763.5 585.8C762.5 594.2 762.2 602.8 762.5 610.8C762.8 618.8 764.6 628.2 765.6 633.8C766.7 639.3 768.2 642.4 768.8 644.2 M770.8 540.0C770.1 545.2 767.5 560.8 766.7 571.2C765.8 581.7 765.8 597.3 765.6 602.5 M797.9 540.0C796.5 543.5 791.7 553.2 789.6 560.8C787.5 568.5 786.3 578.2 785.4 585.8C784.5 593.5 783.9 599.7 784.4 606.7C784.9 613.6 786.3 621.2 788.5 627.5C790.8 633.8 796.4 641.4 797.9 644.2 M797.9 540.0C796.9 543.8 793.4 554.6 791.7 562.9C789.9 571.2 788.2 581.7 787.5 590.0C786.8 598.3 786.3 606.0 787.5 612.9C788.7 619.9 793.6 628.5 794.8 631.7 M807.3 540.0L807.9 554.6 M837.5 540.0C837.2 543.5 836.8 554.6 835.4 560.8C834.0 567.1 830.2 574.7 829.2 577.5 M838.5 540.0C837.3 545.6 833.5 563.6 831.2 573.3C829.0 583.1 827.1 590.0 825.0 598.3C822.9 606.7 821.0 615.7 818.8 623.3C816.5 631.0 812.7 640.7 811.5 644.2 M829.2 604.6C828.1 608.4 825.3 620.9 822.9 627.5C820.5 634.1 816.0 641.4 814.6 644.2 M761.5 629.6C763.7 631.0 770.7 635.5 775.0 637.9C779.3 640.3 785.4 643.1 787.5 644.2 M700.0 627.5L710.4 644.2" stroke-width="1.0"/></g><g mask="url(#c11)"><path d="M680.0 347.5C681.4 344.0 684.9 334.3 688.3 326.7C691.8 319.0 697.0 309.0 700.8 301.7C704.7 294.4 708.3 287.6 711.2 282.9C714.2 278.2 717.3 275.1 718.5 273.5 M718.5 273.5C718.9 275.8 719.8 282.7 720.6 287.1C721.5 291.4 723.2 297.5 723.8 299.6 M692.5 335.0C694.6 331.5 700.7 320.4 705.0 314.2C709.3 307.9 716.3 300.3 718.5 297.5 M690.4 339.2C692.5 335.7 698.8 324.6 702.9 318.3C707.1 312.1 711.8 305.0 715.4 301.7C719.1 298.4 723.2 299.1 724.8 298.5 M680.0 294.4C683.5 295.6 693.9 299.1 700.8 301.7C707.8 304.3 716.1 307.9 721.7 310.0C727.2 312.1 729.7 312.4 734.2 314.2C738.7 315.9 746.3 319.4 748.8 320.4 M715.4 312.1C718.2 310.0 725.1 304.4 732.1 299.6C739.0 294.7 752.9 285.7 757.1 282.9 M755.0 285.0C755.2 286.7 755.2 291.8 756.0 295.4C756.9 299.1 759.5 305.0 760.2 306.9 M762.3 306.9C764.2 308.8 769.8 314.3 773.8 318.3C777.7 322.3 782.6 326.3 786.2 330.8C789.9 335.3 794.1 343.0 795.6 345.4 M780.0 326.7C781.7 329.4 788.0 338.5 790.4 343.3C792.8 348.2 793.9 351.1 794.6 355.8C795.3 360.5 794.6 368.9 794.6 371.5 M708.1 362.1C712.1 361.2 724.6 358.0 732.1 356.9C739.5 355.8 746.0 355.4 752.9 355.4C759.9 355.4 765.8 355.4 773.8 356.9C781.7 358.3 796.3 363.0 800.8 364.2 M707.1 366.2L721.7 360.0 M727.9 320.4C730.3 320.4 737.6 319.0 742.5 320.4C747.4 321.8 753.8 324.9 757.1 328.8C760.4 332.6 761.6 338.5 762.3 343.3C763.0 348.2 762.8 354.1 761.2 357.9C759.7 361.7 756.4 364.5 752.9 366.2C749.4 368.0 744.6 369.0 740.4 368.3C736.2 367.6 731.0 365.6 727.9 362.1C724.8 358.6 722.9 352.7 721.7 347.5C720.5 342.3 719.6 335.3 720.6 330.8C721.7 326.3 726.7 322.2 727.9 320.4 M715.4 314.2C718.5 313.8 728.3 311.2 734.2 312.1C740.1 313.0 746.0 316.2 750.8 319.4C755.7 322.5 760.2 326.1 763.3 330.8C766.5 335.5 768.2 341.9 769.6 347.5C771.0 353.1 771.7 358.6 771.7 364.2C771.7 369.7 771.3 377.0 769.6 380.8C767.8 384.7 765.1 386.0 761.2 387.1C757.4 388.1 751.9 388.8 746.7 387.1C741.5 385.3 735.2 381.2 730.0 376.7C724.8 372.2 718.9 365.9 715.4 360.0C711.9 354.1 709.9 347.5 709.2 341.2C708.5 335.0 709.2 327.0 711.2 322.5C713.3 318.0 719.9 315.6 721.7 314.2 M705.0 326.7C706.4 325.3 709.2 320.9 713.3 318.3C717.5 315.7 724.4 311.4 730.0 311.0C735.6 310.7 741.1 313.3 746.7 316.2C752.2 319.2 759.2 323.2 763.3 328.8C767.5 334.3 770.1 343.0 771.7 349.6C773.2 356.2 773.4 362.4 772.7 368.3C772.0 374.2 769.8 380.8 767.5 385.0C765.2 389.2 763.3 391.9 759.2 393.3C755.0 394.7 748.1 394.7 742.5 393.3C736.9 391.9 731.4 389.2 725.8 385.0C720.3 380.8 713.0 374.6 709.2 368.3C705.3 362.1 703.6 354.4 702.9 347.5C702.2 340.6 704.7 330.1 705.0 326.7 M761.2 343.3C761.4 346.8 761.9 357.2 762.3 364.2C762.6 371.1 763.0 378.1 763.3 385.0C763.7 391.9 764.2 402.4 764.4 405.8 M765.4 360.0C765.5 364.2 765.7 377.4 765.8 385.0C766.0 392.6 766.4 402.4 766.5 405.8 M696.7 362.1C696.0 361.0 694.6 356.9 692.5 355.8C690.4 354.8 686.2 354.8 684.2 355.8C682.1 356.9 680.0 359.7 680.0 362.1C680.0 364.5 682.1 369.4 684.2 370.4C686.2 371.5 690.8 369.7 692.5 368.3C694.2 366.9 695.3 363.5 694.6 362.1C693.9 360.7 689.4 360.3 688.3 360.0 M680.0 372.5C681.0 372.8 683.8 374.9 686.2 374.6C688.7 374.2 693.2 371.1 694.6 370.4 M692.5 368.3C695.6 369.4 705.3 372.7 711.2 374.6C717.2 376.5 722.7 378.4 727.9 379.8C733.1 381.2 740.1 382.4 742.5 382.9 M710.2 380.8L711.2 410.0 M713.3 382.9C713.9 384.7 715.4 389.9 716.5 393.3C717.5 396.8 719.1 402.0 719.6 403.8 M711.2 382.9C714.7 384.3 725.1 388.5 732.1 391.2C739.0 394.0 747.0 397.2 752.9 399.6C758.8 402.0 765.1 404.8 767.5 405.8 M717.5 401.7L742.5 410.0 M680.0 360.0C681.0 357.2 683.5 349.6 686.2 343.3C689.0 337.1 693.2 328.4 696.7 322.5C700.1 316.6 703.4 312.1 707.1 307.9C710.7 303.8 716.6 299.2 718.5 297.5" stroke-width="1.0"/><path d="M706.0 378.8C706.2 381.5 706.9 390.2 707.1 395.4C707.3 400.6 707.1 407.6 707.1 410.0" stroke-width="2.0"/></g><g mask="url(#c12)"><path d="M708.8 400.0C708.9 403.5 709.4 413.9 709.8 420.8C710.1 427.8 711.0 434.7 710.8 441.7C710.7 448.6 709.6 455.6 708.8 462.5C707.9 469.4 706.3 476.4 705.6 483.3C704.9 490.3 704.6 497.2 704.6 504.2C704.6 511.1 705.3 517.4 705.6 525.0C706.0 532.6 706.5 545.8 706.7 550.0" stroke-width="1.7"/><path d="M710.8 400.0C711.2 404.2 712.7 416.3 712.9 425.0C713.1 433.7 712.4 444.1 711.9 452.1C711.4 460.1 710.1 469.4 709.8 472.9 M704.6 452.1C704.2 457.3 702.7 472.9 702.5 483.3C702.3 493.8 702.8 503.5 703.5 514.6C704.2 525.7 706.1 544.1 706.7 550.0 M712.9 441.7C714.3 445.8 718.1 458.7 721.2 466.7C724.4 474.7 728.5 482.6 731.7 489.6C734.8 496.5 737.2 502.4 740.0 508.3C742.8 514.2 745.6 519.4 748.3 525.0C751.1 530.6 754.6 537.5 756.7 541.7C758.8 545.8 760.1 548.6 760.8 550.0 M690.0 406.2C691.0 405.9 694.2 405.2 696.2 404.2C698.3 403.1 701.5 400.7 702.5 400.0 M717.1 402.1C721.2 404.2 733.8 410.8 742.1 414.6C750.4 418.4 762.9 423.3 767.1 425.0 M750.4 400.0L769.2 408.3 M760.8 400.0C761.2 402.1 762.2 408.3 762.9 412.5C763.6 416.7 764.7 422.9 765.0 425.0 M731.7 412.5C731.0 413.9 728.5 418.1 727.5 420.8C726.5 423.6 725.8 427.8 725.4 429.2 M731.7 414.6C731.7 417.4 731.0 425.0 731.7 431.2C732.4 437.5 733.8 445.1 735.8 452.1C737.9 459.0 741.7 466.3 744.2 472.9C746.6 479.5 749.4 488.5 750.4 491.7 M731.7 418.8C735.1 419.4 746.2 421.5 752.5 422.9C758.8 424.3 766.4 426.4 769.2 427.1 M733.8 431.2C736.9 432.3 745.9 435.8 752.5 437.5C759.1 439.2 767.8 440.6 773.3 441.7C778.9 442.7 783.8 443.4 785.8 443.8 M736.9 433.3C737.7 435.4 740.2 441.0 742.1 445.8C744.0 450.7 745.9 454.9 748.3 462.5C750.8 470.1 755.3 486.8 756.7 491.7 M785.8 442.7C786.0 444.6 787.6 450.9 786.9 454.2C786.2 457.5 785.3 459.0 781.7 462.5C778.0 466.0 770.6 470.8 765.0 475.0C759.4 479.2 753.5 481.6 748.3 487.5C743.1 493.4 736.2 506.6 733.8 510.4 M750.4 491.7L756.7 489.6 M752.5 441.7C754.2 442.7 760.8 445.5 762.9 447.9C765.0 450.3 764.7 454.9 765.0 456.2 M765.0 460.4L771.2 460.4 M767.1 429.2C768.1 431.2 770.9 437.5 773.3 441.7C775.8 445.8 778.9 450.0 781.7 454.2C784.4 458.3 786.9 462.5 790.0 466.7C793.1 470.8 798.7 477.1 800.4 479.2 M765.0 422.9C765.7 424.7 767.8 428.8 769.2 433.3C770.6 437.8 772.6 447.2 773.3 450.0 M815.0 446.9C812.2 450.5 802.8 462.0 798.3 468.8C793.8 475.5 791.0 480.9 787.9 487.5C784.8 494.1 781.7 501.4 779.6 508.3C777.5 515.3 776.5 522.2 775.4 529.2C774.4 536.1 773.7 546.5 773.3 550.0 M812.9 450.0C810.1 453.5 801.1 463.5 796.2 470.8C791.4 478.1 786.9 486.1 783.8 493.8C780.6 501.4 779.4 508.7 777.5 516.7C775.6 524.7 773.2 537.5 772.3 541.7 M781.7 495.8C784.4 492.0 792.8 480.6 798.3 472.9C803.9 465.3 812.2 453.8 815.0 450.0 M814.0 451.0L826.5 472.9 M802.5 514.6L808.8 504.2 M798.3 477.1C799.0 479.9 801.3 487.8 802.5 493.8C803.7 499.7 804.6 505.9 805.6 512.5C806.7 519.1 808.1 527.1 808.8 533.3C809.4 539.6 809.6 547.2 809.8 550.0 M735.8 508.3C735.5 509.7 733.1 513.2 733.8 516.7C734.4 520.1 736.9 524.7 740.0 529.2C743.1 533.7 750.4 541.3 752.5 543.8 M690.0 445.8C692.1 446.5 699.0 448.6 702.5 450.0C706.0 451.4 709.4 453.5 710.8 454.2 M690.0 462.5L702.5 454.2 M690.0 470.8L698.3 466.7 M690.0 508.3L700.4 507.3 M690.0 533.3C692.1 532.8 698.3 531.2 702.5 530.2C706.7 529.2 712.9 527.6 715.0 527.1" stroke-width="1.0"/><path d="M815.0 450.0C816.7 453.1 822.6 462.5 825.4 468.8C828.2 475.0 829.9 480.9 831.7 487.5C833.4 494.1 834.7 501.4 835.8 508.3C836.9 515.3 837.8 522.2 838.3 529.2C838.9 536.1 838.9 546.5 839.0 550.0" stroke-width="1.4"/><path d="M827.5 472.9C825.8 476.0 820.6 485.1 817.1 491.7C813.6 498.3 809.8 506.2 806.7 512.5C803.5 518.8 800.8 522.9 798.3 529.2C795.9 535.4 793.1 546.5 792.1 550.0" stroke-width="1.3"/></g><g mask="url(#c13)"><path d="M511.7 429.2C511.0 431.9 509.2 440.6 507.5 445.8C505.8 451.0 503.7 455.9 501.2 460.4C498.8 464.9 494.3 470.8 492.9 472.9 M524.2 431.2C523.5 434.0 521.7 443.1 520.0 447.9C518.3 452.8 516.2 456.6 513.8 460.4C511.3 464.2 506.8 469.1 505.4 470.8 M497.1 427.1C496.7 430.2 496.4 440.3 495.0 445.8C493.6 451.4 491.2 456.2 488.8 460.4C486.3 464.6 481.8 469.1 480.4 470.8 M517.9 456.2C516.2 459.4 511.3 468.8 507.5 475.0C503.7 481.2 498.8 487.8 495.0 493.8C491.2 499.7 486.3 507.6 484.6 510.4 M486.7 427.1C485.3 430.6 481.1 441.3 478.3 447.9C475.6 454.5 472.4 460.8 470.0 466.7C467.6 472.6 464.8 480.6 463.8 483.3 M489.8 437.5C488.2 440.3 483.4 448.6 480.4 454.2C477.5 459.7 474.5 464.9 472.1 470.8C469.7 476.7 467.6 483.3 465.8 489.6C464.1 495.8 462.4 505.2 461.7 508.3 M470.0 516.7C470.7 513.5 472.1 503.5 474.2 497.9C476.2 492.4 479.4 487.2 482.5 483.3C485.6 479.5 491.2 476.4 492.9 475.0 M524.2 462.5C523.6 464.6 521.4 470.8 521.0 475.0C520.7 479.2 521.9 485.4 522.1 487.5" stroke-width="1.0"/></g><g mask="url(#c14)"><path d="M596.3 280.0C596.5 281.3 597.2 285.4 597.3 287.8C597.4 290.2 597.4 292.6 596.8 294.6C596.2 296.5 595.0 298.2 593.9 299.5C592.8 300.8 590.6 301.9 590.0 302.4" stroke-width="2.0"/><path d="M590.0 289.7C590.6 289.4 592.4 288.4 593.9 287.8C595.4 287.1 597.0 286.2 598.8 285.8C600.5 285.5 602.5 285.5 604.6 285.8C606.7 286.2 609.6 287.0 611.4 287.8C613.2 288.6 613.7 289.7 615.3 290.7C616.9 291.7 619.7 292.3 621.1 293.6C622.6 294.9 623.3 296.9 624.0 298.5C624.8 300.1 625.5 302.4 625.8 303.2 M599.7 289.7C601.0 290.2 605.4 291.5 607.5 292.6C609.6 293.8 611.1 294.9 612.4 296.5C613.7 298.2 614.0 300.6 615.3 302.4C616.6 304.2 618.7 305.5 620.2 307.2C621.6 309.0 622.9 311.9 624.0 313.1C625.2 314.2 626.0 314.5 627.0 314.0C627.9 313.6 629.2 311.8 629.9 310.2C630.5 308.5 630.7 305.3 630.9 304.3 M625.8 303.3C627.0 302.0 630.3 297.7 632.8 295.6C635.3 293.5 637.2 292.5 640.6 290.7C644.0 288.9 650.3 286.0 653.2 284.9C656.1 283.7 657.3 284.1 658.1 283.9 M628.9 303.3C629.9 302.5 632.5 299.5 634.7 298.5C637.0 297.5 639.6 298.5 642.5 297.5C645.4 296.5 649.3 294.6 652.3 292.6C655.2 290.7 658.4 287.3 660.0 285.8C661.7 284.4 661.7 284.2 662.0 283.9 M657.1 280.0C657.1 281.0 656.6 284.4 657.1 285.8C657.6 287.3 659.6 288.3 660.0 288.8 M625.0 330.6C626.6 328.8 631.5 323.8 634.7 319.9C638.0 316.0 641.6 311.1 644.5 307.2C647.4 303.3 650.0 299.5 652.3 296.5C654.5 293.6 656.5 291.2 658.1 289.7C659.7 288.3 661.3 288.1 662.0 287.8 M632.8 322.8C634.4 321.0 639.1 316.0 642.5 312.1C645.9 308.2 650.6 302.5 653.2 299.5C655.8 296.4 657.3 294.6 658.1 293.6 M635.7 328.6C636.9 327.2 639.4 323.6 642.5 319.9C645.6 316.2 652.3 308.5 654.2 306.3 M664.9 288.8C667.0 289.6 671.7 291.3 677.5 293.6C683.4 295.9 696.3 300.9 700.0 302.4 M660.0 288.8L669.8 293.6 M590.0 299.5C591.6 300.4 596.5 302.9 599.7 305.3C603.0 307.7 606.9 311.5 609.5 314.0C612.0 316.6 613.0 318.4 615.3 320.9C617.6 323.3 621.8 327.3 623.1 328.6 M590.0 309.2C591.0 309.7 593.6 310.8 595.8 312.1C598.1 313.4 601.0 315.3 603.6 317.0C606.2 318.6 609.8 320.2 611.4 321.8C613.0 323.5 613.0 325.9 613.3 326.7 M601.7 317.0L611.4 317.9 M612.4 320.9C612.5 322.5 612.7 328.0 613.3 330.6C614.0 333.2 614.8 335.1 616.3 336.4C617.7 337.7 619.5 338.2 622.1 338.4C624.7 338.5 630.0 338.7 631.8 337.4C633.6 336.1 632.6 332.7 632.8 330.6C633.0 328.5 632.8 325.7 632.8 324.7 M621.1 336.4L619.2 350.0 M631.8 338.4L634.7 350.0 M636.7 330.6L633.8 342.3 M590.0 317.0L598.8 321.8 M590.0 334.5L598.8 338.4 M590.0 338.4L599.7 342.3 M601.7 325.7L607.5 338.4 M611.4 325.7C611.2 328.2 611.6 336.3 610.4 340.3C609.3 344.4 605.6 348.4 604.6 350.0 M700.0 291.7C698.7 293.3 694.9 297.2 692.1 301.4C689.4 305.6 685.8 312.1 683.4 317.0C681.0 321.8 679.0 325.1 677.5 330.6C676.1 336.1 675.1 346.8 674.6 350.0 M679.5 326.7C678.8 328.6 676.6 334.5 675.6 338.4C674.6 342.3 674.0 348.1 673.7 350.0 M700.0 318.9C698.9 320.9 695.4 325.4 693.1 330.6C690.8 335.8 687.4 346.8 686.3 350.0 M700.0 323.8L691.2 338.4 M700.0 343.2L696.0 350.0" stroke-width="1.0"/><path d="M634.7 330.6C636.4 328.6 640.6 323.3 644.5 318.9C648.4 314.5 652.9 308.0 658.1 304.3C663.3 300.6 672.7 297.8 675.6 296.5" stroke-width="1.3"/></g><g mask="url(#c15)"><path d="M613.8 330.0C614.2 331.0 615.0 334.9 616.2 336.2C617.5 337.6 618.8 338.0 621.2 338.1C623.8 338.2 629.2 338.2 631.2 336.9C633.3 335.5 633.3 331.1 633.8 330.0 M621.9 335.6C621.4 338.9 619.9 347.6 618.8 355.0C617.6 362.4 616.2 372.5 615.0 380.0C613.8 387.5 612.1 393.3 611.2 400.0C610.4 406.7 610.2 416.7 610.0 420.0 M607.5 396.2L606.2 420.0 M631.2 340.0C631.9 341.9 633.1 347.5 635.0 351.2C636.9 355.0 640.4 359.8 642.5 362.5C644.6 365.2 646.2 365.0 647.5 367.5C648.8 370.0 648.8 374.4 650.0 377.5C651.2 380.6 653.1 383.1 655.0 386.2C656.9 389.4 658.5 393.3 661.2 396.2C664.0 399.2 667.3 401.7 671.2 403.8C675.2 405.8 681.0 408.5 685.0 408.8C689.0 409.0 691.7 406.9 695.0 405.0C698.3 403.1 703.3 398.8 705.0 397.5 M633.8 352.5L645.0 366.2 M677.5 330.0C676.9 332.5 674.9 340.2 673.8 345.0C672.6 349.8 670.8 355.0 670.6 358.8C670.4 362.5 671.1 365.1 672.5 367.5C673.9 369.9 676.5 371.9 678.8 373.1C681.0 374.4 684.0 375.1 686.2 375.0C688.5 374.9 690.8 374.0 692.5 372.5C694.2 371.0 695.5 368.3 696.2 366.2C697.0 364.2 697.5 361.7 696.9 360.0C696.2 358.3 694.1 356.9 692.5 356.2C690.9 355.6 689.2 355.8 687.5 356.2C685.8 356.7 683.8 357.5 682.5 358.8C681.2 360.0 680.0 362.3 680.0 363.8C680.0 365.2 681.2 367.1 682.5 367.5C683.8 367.9 686.2 367.3 687.5 366.2C688.8 365.2 689.6 362.1 690.0 361.2 M693.8 330.0C692.7 332.1 689.6 337.9 687.5 342.5C685.4 347.1 682.3 355.0 681.2 357.5 M708.8 330.0C706.9 332.1 701.0 337.9 697.5 342.5C694.0 347.1 689.6 354.0 687.5 357.5C685.4 361.0 685.4 362.7 685.0 363.8 M692.5 370.0C694.8 370.4 701.7 371.5 706.2 372.5C710.8 373.5 717.7 375.6 720.0 376.2 M703.8 330.0C704.0 332.1 704.0 338.3 705.0 342.5C706.0 346.7 707.5 351.7 710.0 355.0C712.5 358.3 718.3 361.2 720.0 362.5 M712.5 330.0C712.7 332.1 712.5 338.3 713.8 342.5C715.0 346.7 719.0 352.9 720.0 355.0 M707.5 366.2L720.0 358.8 M711.2 380.0C711.4 383.1 711.7 392.1 711.9 398.8C712.1 405.4 712.4 416.5 712.5 420.0 M705.0 372.5L705.6 420.0 M712.5 382.5L720.0 388.8 M712.5 385.0L720.0 400.0 M600.0 350.0C601.2 349.2 605.4 346.9 607.5 345.0C609.6 343.1 611.7 339.8 612.5 338.8 M603.8 330.0L607.5 337.5" stroke-width="1.0"/><path d="M677.5 332.5C677.1 334.2 675.8 339.8 675.0 342.5C674.2 345.2 672.9 347.7 672.5 348.8" stroke-width="1.5"/><path d="M706.9 378.8C707.0 381.0 707.3 388.1 707.5 392.5C707.7 396.9 707.9 400.4 708.1 405.0C708.3 409.6 708.6 417.5 708.8 420.0" stroke-width="2.0"/></g><g mask="url(#c16)"><path d="M502.5 281.7C502.4 284.4 502.2 293.9 501.7 298.3C501.1 302.8 503.1 303.6 499.2 308.3C495.3 313.1 484.6 320.3 478.3 326.7C472.1 333.1 466.1 340.3 461.7 346.7C457.2 353.1 453.3 361.9 451.7 365.0 M470.0 333.3L461.7 343.3 M451.7 365.8C456.1 365.6 469.7 364.3 478.3 364.2C486.9 364.0 496.4 364.7 503.3 365.0C510.3 365.3 517.2 365.7 520.0 365.8 M505.8 280.8C509.6 283.8 521.2 292.1 528.3 298.3C535.4 304.6 542.8 311.7 548.3 318.3C553.9 325.0 558.3 332.5 561.7 338.3C565.0 344.2 567.2 350.8 568.3 353.3 M535.0 272.5C537.8 276.0 547.2 286.5 551.7 293.3C556.1 300.1 558.3 306.4 561.7 313.3C565.0 320.3 568.6 330.3 571.7 335.0C574.7 339.7 578.6 340.6 580.0 341.7 M535.0 272.5C534.4 274.9 533.3 282.4 531.7 286.7C530.0 291.0 526.1 296.4 525.0 298.3 M595.0 288.3C591.7 289.4 582.8 293.1 575.0 295.0C567.2 296.9 557.5 298.6 548.3 300.0C539.2 301.4 526.1 302.5 520.0 303.3C513.9 304.2 513.1 304.7 511.7 305.0 M483.3 360.0C485.0 356.7 490.0 346.1 493.3 340.0C496.7 333.9 499.7 328.3 503.3 323.3C506.9 318.3 510.8 313.3 515.0 310.0C519.2 306.7 523.3 304.3 528.3 303.3C533.3 302.4 541.0 302.8 545.0 304.2C549.0 305.6 551.1 307.9 552.5 311.7C553.9 315.4 554.0 321.4 553.3 326.7C552.6 331.9 550.8 338.6 548.3 343.3C545.8 348.1 542.8 351.9 538.3 355.0C533.9 358.1 527.5 360.1 521.7 361.7C515.8 363.2 508.3 364.3 503.3 364.2C498.3 364.0 493.6 361.4 491.7 360.8 M486.7 366.7C488.1 363.3 491.9 352.8 495.0 346.7C498.1 340.6 501.4 335.3 505.0 330.0C508.6 324.7 512.2 318.9 516.7 315.0C521.1 311.1 526.7 308.1 531.7 306.7C536.7 305.3 542.9 305.0 546.7 306.7C550.4 308.3 552.9 312.2 554.2 316.7C555.4 321.1 555.4 327.8 554.2 333.3C552.9 338.9 550.4 345.6 546.7 350.0C542.9 354.4 536.9 357.8 531.7 360.0C526.4 362.2 517.8 362.8 515.0 363.3 M498.3 330.0C500.0 327.5 505.0 319.2 508.3 315.0C511.7 310.8 514.4 307.5 518.3 305.0C522.2 302.5 527.2 300.8 531.7 300.0C536.1 299.2 542.8 300.0 545.0 300.0 M488.3 353.3C489.4 350.6 492.8 341.1 495.0 336.7C497.2 332.2 500.6 328.3 501.7 326.7 M508.3 356.7C507.8 354.4 505.0 347.8 505.0 343.3C505.0 338.9 506.1 334.4 508.3 330.0C510.6 325.6 514.4 320.3 518.3 316.7C522.2 313.1 527.5 310.0 531.7 308.3C535.8 306.7 540.6 306.1 543.3 306.7C546.1 307.2 547.6 308.3 548.3 311.7C549.0 315.0 548.9 321.9 547.5 326.7C546.1 331.4 543.2 335.8 540.0 340.0C536.8 344.2 532.5 348.8 528.3 351.7C524.2 354.6 518.3 356.7 515.0 357.5C511.7 358.3 509.4 356.8 508.3 356.7 M561.7 353.3C561.1 352.8 560.0 350.3 558.3 350.0C556.7 349.7 553.1 350.3 551.7 351.7C550.3 353.1 549.2 356.5 550.0 358.3C550.8 360.1 554.4 362.2 556.7 362.5C558.9 362.8 562.1 361.2 563.3 360.0C564.6 358.8 564.7 356.1 564.2 355.0C563.6 353.9 561.2 353.1 560.0 353.3C558.8 353.6 557.2 356.1 556.7 356.7 M545.0 366.7C547.8 366.9 557.5 368.9 561.7 368.3C565.8 367.8 568.3 365.3 570.0 363.3C571.7 361.4 571.4 357.8 571.7 356.7 M565.8 326.7C566.5 328.9 569.2 335.6 570.0 340.0C570.8 344.4 570.7 351.1 570.8 353.3 M600.0 265.0L600.8 281.7 M591.7 293.3C589.4 294.2 581.7 297.2 578.3 298.3C575.0 299.4 572.8 299.7 571.7 300.0 M571.7 298.3C574.2 299.7 582.2 303.9 586.7 306.7C591.1 309.4 596.4 313.6 598.3 315.0 M571.7 303.3L595.0 321.7 M578.3 325.0L598.3 338.3 M578.3 330.0L598.3 341.7 M490.0 360.0L488.7 380.0 M486.7 366.7L487.5 380.0 M545.0 366.7L541.7 380.0 M538.3 373.3L555.0 370.0 M605.0 346.7C603.3 348.3 597.5 351.1 595.0 356.7C592.5 362.2 590.8 376.1 590.0 380.0" stroke-width="1.0"/><path d="M595.8 263.3C596.0 265.6 596.7 272.2 597.0 276.7C597.3 281.1 597.4 287.8 597.5 290.0" stroke-width="2.0"/></g><g mask="url(#c17)"><path d="M592.6 167.1C593.3 165.9 594.8 161.7 597.1 159.9C599.3 158.1 601.9 157.4 606.1 156.3C610.3 155.1 619.7 153.5 622.4 153.0 M625.1 152.3C627.9 151.9 637.3 150.0 642.2 149.9C647.2 149.8 652.8 151.4 654.9 151.7 M652.2 150.5L670.2 157.2 M672.9 165.3L678.3 171.6 M682.0 170.7C682.6 172.5 684.4 177.8 685.6 181.5C686.7 185.3 688.3 191.3 688.8 193.3 M685.6 189.7C685.1 191.9 683.9 198.8 682.9 203.2C681.8 207.6 680.3 211.3 679.2 215.8C678.2 220.4 677.0 227.9 676.5 230.3 M591.7 163.5C590.8 165.3 587.9 170.4 586.3 174.3C584.6 178.2 582.9 182.1 581.7 186.9C580.5 191.8 579.3 198.1 579.0 203.2C578.7 208.3 579.0 212.8 579.9 217.6C580.8 222.5 582.8 227.9 584.4 232.1C586.1 236.3 589.0 241.1 589.9 242.9 M583.5 181.5C583.4 184.2 582.5 191.8 582.6 197.8C582.8 203.8 583.5 212.2 584.4 217.6C585.3 223.1 587.5 228.2 588.1 230.3 M595.3 174.3C594.4 176.1 591.2 180.9 589.9 185.1C588.5 189.4 587.5 194.2 587.2 199.6C586.9 205.0 587.3 211.9 588.1 217.6C588.8 223.4 591.1 231.2 591.7 233.9 M589.0 180.6L588.1 188.8 M597.1 176.1C596.2 178.2 592.9 184.2 591.7 188.8C590.5 193.3 590.2 200.8 589.9 203.2 M628.7 163.5C626.1 164.4 618.0 166.8 613.3 168.9C608.7 171.0 604.0 173.4 600.7 176.1C597.4 178.8 594.7 183.6 593.5 185.1 M611.5 174.3C614.8 173.9 625.1 171.9 631.4 171.6C637.7 171.3 644.9 172.1 649.5 172.5C654.0 173.0 657.0 174.0 658.5 174.3 M632.3 168.5C634.9 168.9 643.0 169.4 647.6 170.7C652.3 172.0 656.8 174.0 660.3 176.1C663.7 178.2 667.1 182.1 668.4 183.3 M668.4 183.3C668.7 184.8 669.6 188.8 670.2 192.4C670.8 196.0 671.7 200.8 672.0 205.0C672.3 209.2 672.8 213.4 672.0 217.6C671.3 221.9 669.5 226.4 667.5 230.3C665.6 234.2 663.3 237.5 660.3 241.1C657.3 244.7 653.4 248.6 649.5 252.0C645.5 255.3 641.3 258.6 636.8 261.0C632.3 263.4 626.9 265.8 622.4 266.4C617.9 267.0 613.6 266.7 609.7 264.6C605.8 262.5 601.9 258.0 598.9 253.8C595.9 249.5 593.5 244.7 591.7 239.3C589.9 233.9 588.7 227.3 588.1 221.3C587.5 215.2 587.5 208.6 588.1 203.2C588.7 197.8 589.9 193.0 591.7 188.8C593.5 184.5 595.9 180.6 598.9 177.9C601.9 175.2 607.9 173.4 609.7 172.5 M669.3 186.9C669.9 189.4 672.2 196.3 672.9 201.4C673.7 206.5 674.3 212.8 673.8 217.6C673.4 222.5 670.8 228.2 670.2 230.3 M676.5 215.8C675.6 218.2 673.2 226.1 671.1 230.3C669.0 234.5 666.6 237.5 663.9 241.1C661.2 244.7 656.4 250.1 654.9 252.0 M612.4 252.0C613.5 251.7 616.8 250.0 618.8 250.1C620.7 250.3 622.1 252.6 624.2 252.9C626.3 253.1 629.3 251.7 631.4 251.6C633.5 251.5 634.9 252.0 636.8 252.3C638.8 252.7 642.1 253.5 643.1 253.8 M658.5 246.5C658.3 248.3 657.7 253.5 657.6 257.4C657.4 261.3 657.6 267.9 657.6 270.0 M593.5 264.6L595.3 270.0 M624.2 266.4C627.2 266.1 637.1 265.2 642.2 264.6C647.3 264.0 652.8 263.1 654.9 262.8" stroke-width="1.0"/></g><g mask="url(#c18)"><path d="M470.0 470.0C468.6 472.2 463.9 478.6 461.7 483.3C459.4 488.1 457.6 493.6 456.7 498.3C455.7 503.1 455.3 507.2 455.8 511.7C456.4 516.1 457.9 521.1 460.0 525.0C462.1 528.9 464.4 531.9 468.3 535.0C472.2 538.1 478.1 540.8 483.3 543.3C488.6 545.8 493.9 548.3 500.0 550.0C506.1 551.7 514.4 552.5 520.0 553.3C525.6 554.2 531.1 554.7 533.3 555.0 M475.0 475.0C473.6 476.9 468.9 482.8 466.7 486.7C464.4 490.6 462.6 494.2 461.7 498.3C460.7 502.5 460.6 507.5 460.8 511.7C461.1 515.8 461.5 519.7 463.3 523.3C465.1 526.9 467.8 530.3 471.7 533.3C475.6 536.4 484.2 540.3 486.7 541.7 M466.7 470.0C465.6 472.8 461.7 481.1 460.0 486.7C458.3 492.2 457.2 500.6 456.7 503.3 M476.7 480.0C479.4 478.6 489.4 473.3 493.3 471.7C497.2 470.0 498.9 470.3 500.0 470.0 M466.7 476.7C468.9 476.1 475.8 474.0 480.0 473.3C484.2 472.6 489.7 472.6 491.7 472.5 M490.0 470.0C488.3 472.2 482.8 478.3 480.0 483.3C477.2 488.3 475.0 494.4 473.3 500.0C471.7 505.6 470.3 511.1 470.0 516.7C469.7 522.2 471.4 530.6 471.7 533.3 M490.8 486.7C489.6 488.9 485.4 495.6 483.3 500.0C481.2 504.4 480.0 508.9 478.3 513.3C476.7 517.8 474.2 524.4 473.3 526.7 M520.0 470.0C518.1 472.2 511.7 478.3 508.3 483.3C505.0 488.3 501.4 497.2 500.0 500.0 M516.7 475.0C514.4 478.3 508.9 488.6 503.3 495.0C497.8 501.4 486.7 510.3 483.3 513.3 M521.7 470.0C521.5 472.5 520.0 480.8 520.8 485.0C521.7 489.2 524.0 491.9 526.7 495.0C529.3 498.1 532.8 500.8 536.7 503.3C540.6 505.8 545.6 507.2 550.0 510.0C554.4 512.8 560.0 517.5 563.3 520.0C566.7 522.5 568.9 524.2 570.0 525.0 M542.5 470.0C542.8 474.2 543.5 486.7 544.2 495.0C544.9 503.3 546.0 512.5 546.7 520.0C547.4 527.5 548.3 533.9 548.3 540.0C548.3 546.1 546.9 553.9 546.7 556.7 M556.7 470.0C558.1 472.8 562.5 481.1 565.0 486.7C567.5 492.2 569.7 497.8 571.7 503.3C573.6 508.9 575.6 514.4 576.7 520.0C577.8 525.6 578.3 531.7 578.3 536.7C578.3 541.7 576.9 547.8 576.7 550.0 M560.0 505.0C562.8 505.6 568.3 507.2 576.7 508.3C585.0 509.4 604.4 511.1 610.0 511.7 M596.7 513.3L610.0 515.0 M460.0 505.0C463.9 507.2 476.7 514.4 483.3 518.3C490.0 522.2 497.2 526.7 500.0 528.3 M473.3 518.3C476.4 519.7 484.4 523.6 491.7 526.7C498.9 529.7 512.5 535.0 516.7 536.7 M498.3 505.8C502.8 507.1 516.4 511.0 525.0 513.3C533.6 515.7 542.5 518.1 550.0 520.0C557.5 521.9 566.7 524.2 570.0 525.0 M530.0 518.3L550.0 521.7 M550.0 536.7C548.3 536.7 544.4 536.9 540.0 536.7C535.6 536.4 526.7 536.4 523.3 535.0C520.0 533.6 520.3 531.1 520.0 528.3C519.7 525.6 520.6 521.1 521.7 518.3C522.8 515.6 525.8 512.8 526.7 511.7 M518.3 536.7C518.1 537.5 516.1 539.7 516.7 541.7C517.2 543.6 518.3 546.9 521.7 548.3C525.0 549.7 531.4 550.0 536.7 550.0C541.9 550.0 548.9 550.0 553.3 548.3C557.8 546.7 561.4 543.3 563.3 540.0C565.3 536.7 565.6 531.7 565.0 528.3C564.4 525.0 560.8 521.4 560.0 520.0 M508.3 526.7C509.7 525.0 513.3 520.6 516.7 516.7C520.0 512.8 525.6 506.1 528.3 503.3C531.1 500.6 532.5 500.6 533.3 500.0 M508.3 526.7C507.5 528.3 504.7 533.1 503.3 536.7C501.9 540.3 500.6 546.4 500.0 548.3 M551.7 533.3C554.2 533.9 561.4 535.0 566.7 536.7C571.9 538.3 577.8 541.1 583.3 543.3C588.9 545.6 595.6 548.3 600.0 550.0C604.4 551.7 608.3 552.8 610.0 553.3 M593.3 546.7L610.0 546.7 M583.3 545.0C586.1 546.1 595.6 549.7 600.0 551.7C604.4 553.6 608.3 555.8 610.0 556.7 M610.0 510.0C606.9 512.8 597.2 520.8 591.7 526.7C586.1 532.5 581.4 538.9 576.7 545.0C571.9 551.1 566.7 558.1 563.3 563.3C560.0 568.6 557.8 574.4 556.7 576.7 M583.3 541.7C581.7 544.2 576.7 551.4 573.3 556.7C570.0 561.9 565.0 570.6 563.3 573.3 M550.0 545.0L556.7 576.7 M565.0 536.7C565.8 539.4 568.1 546.7 570.0 553.3C571.9 560.0 575.6 572.8 576.7 576.7 M505.0 550.0L533.3 560.0 M470.0 536.7C473.6 538.6 485.0 544.3 491.7 548.3C498.3 552.4 506.9 558.8 510.0 560.8 M610.0 583.3L606.7 590.0" stroke-width="1.0"/><path d="M555.0 470.0C555.8 472.8 559.4 481.1 560.0 486.7C560.6 492.2 559.7 497.8 558.3 503.3C556.9 508.9 553.6 513.9 551.7 520.0C549.7 526.1 548.3 533.3 546.7 540.0C545.0 546.7 543.1 551.7 541.7 560.0C540.3 568.3 538.9 585.0 538.3 590.0" stroke-width="1.6"/><path d="M598.3 470.0C595.8 473.1 587.8 482.5 583.3 488.3C578.9 494.2 573.6 502.2 571.7 505.0" stroke-width="1.3"/></g></g></svg>
<div id="vtrack" class="abs"></div>
<div id="htrack" class="abs"></div>
<svg class="abs" style="left:0;top:0" width="1280" height="720">
  <rect x="1261.5" y="51.5" width="12" height="13" rx="1.5" fill="#7f7f7f" stroke="#6c6c6c"/>
  <path d="M1264.5 60.5L1267.5 56.8L1270.5 60.5Z" fill="#fff"/>
  <rect x="1261" y="218" width="12.5" height="327.5" rx="1.5" fill="#9c9c9c" stroke="#7a7a7a"/>
  <rect x="1261.5" y="684.5" width="12" height="13" rx="1.5" fill="#7f7f7f" stroke="#6c6c6c"/>
  <path d="M1264.5 689.5L1267.5 693.2L1270.5 689.5Z" fill="#fff"/>
  <rect x="6.5" y="700.5" width="13" height="12" rx="1.5" fill="#7f7f7f" stroke="#6c6c6c"/>
  <path d="M14.5 703.5L10.8 706.5L14.5 709.5Z" fill="#fff"/>
  <rect x="198.5" y="699.5" width="839" height="13" rx="1.5" fill="#9c9c9c" stroke="#7a7a7a"/>
  <rect x="1245.5" y="701.5" width="13" height="11" rx="1.5" fill="#7f7f7f" stroke="#6c6c6c"/>
  <path d="M1250.5 704L1254.2 707L1250.5 710Z" fill="#fff"/>
</svg>
<div class="abs" style="left:1005px;top:557px;width:256px;height:143px;border-radius:4px;box-shadow:0 3px 14px rgba(0,0,0,0.42);overflow:hidden;background:#f2e2d0">
<svg width="256" height="143" viewBox="0 0 256 143">
  <defs>
    <filter id="bl4" x="-20%" y="-20%" width="140%" height="140%"><feGaussianBlur stdDeviation="5"/></filter>
    <filter id="bl1"><feGaussianBlur stdDeviation="0.35"/></filter>
  </defs>
  <rect width="256" height="143" fill="#f1dfcc"/>
  <g filter="url(#bl4)">
    <path d="M-10 30 L30 40 L45 80 L30 150 L-10 150Z" fill="#f0c47e"/>
    <path d="M0 20 L40 0 L60 0 L10 50Z" fill="#e6d2c0"/>
    <path d="M128 0 L175 0 L150 40 L128 40Z" fill="#f2c27a"/>
    <ellipse cx="190" cy="40" rx="35" ry="30" fill="#f9ecdf"/>
    <path d="M170 70 L256 30 L256 55 L180 90Z" fill="#f6d08c" opacity="0.8"/>
    <ellipse cx="245" cy="40" rx="14" ry="30" fill="#f8e4a8"/>
    <rect x="185" y="95" width="75" height="55" fill="#d2b690"/>
    <ellipse cx="240" cy="135" rx="22" ry="16" fill="#fffaf0"/>
    <ellipse cx="215" cy="80" rx="30" ry="14" fill="#e6d4bc"/>
    <rect x="-5" y="100" width="45" height="50" fill="#c89a6c"/>
  </g>
  <g filter="url(#bl1)">
  <!-- rocks outline bottom-left -->
  <path d="M0 115 L12 113 L17 122 L20 143" stroke="#f0dcc0" stroke-width="1" fill="none"/>
  <!-- pink hair -->
  <path d="M43 0 L28 7 L38 14 L32 24 L40 29 L34 34 L46 40 L44 50 L56 58 L70 62 L83 60 L88 50 L92 36 L100 30 L110 22 L113 10 L116 0Z" fill="#b67272"/>
  <path d="M60 0 L90 0 L96 20 L86 36 L80 26 L70 40 L66 18Z" fill="#d39090"/>
  <path d="M92 0 L114 0 L112 14 L104 24 L98 12Z" fill="#e6b2b0"/>
  <path d="M40 18 L60 30 M45 33 L66 46 M52 45 L74 50 M62 32 L80 56" stroke="#e8b860" stroke-width="1" fill="none"/>
  <path d="M48 10 L64 30 L58 50 L50 40Z" fill="#8c4c4a" opacity="0.7"/>
  <!-- natsu face -->
  <path d="M88 36 L100 30 L112 26 L114 40 L110 58 L100 66 L88 60Z" fill="#f4e6d6"/>
  <path d="M92 36 L100 34" stroke="#6a5050" stroke-width="1.2"/>
  <!-- collar dark + orange -->
  <path d="M58 60 L83 58 L86 68 L60 68Z" fill="#2c2424"/>
  <path d="M82 57 L88 56 L90 68 L84 68Z" fill="#e0884a"/>
  <!-- lucy hair -->
  <path d="M106 24 L128 19 L148 17 L158 24 L160 48 L168 66 L180 74 L185 90 L183 114 L172 106 L160 86 L146 76 L136 84 L120 86 L108 76 L103 58Z" fill="#dcb058"/>
  <path d="M110 30 L124 84 M116 26 L132 80 M124 24 L140 76 M134 22 L150 68 M142 22 L158 58 M150 28 L162 60 M166 72 L180 104 M172 74 L182 96" stroke="#946a30" stroke-width="0.9" fill="none" opacity="0.75"/>
  <path d="M128 18 L148 16 L158 24 L156 34 L140 30 L130 32Z" fill="#9c6a4c"/>
  <path d="M136 22 L152 24 M134 27 L154 29" stroke="#f0e0d0" stroke-width="1" fill="none"/>
  <!-- scarf -->
  <path d="M46 66 L58 62 L86 66 L106 68 L106 84 L96 96 L84 100 L66 92 L50 80Z" fill="#c6c6cc"/>
  <path d="M50 76 L100 80 M62 86 L94 90" stroke="#8c8c94" stroke-width="1.2" fill="none"/>
  <path d="M52 72 L100 76 M58 81 L98 86 M66 89 L92 94" stroke="#f2f2f4" stroke-width="1.8" fill="none"/>
  <path d="M46 66 L56 64 L52 80Z" fill="#74747c"/>
  <!-- vest -->
  <path d="M39 108 L50 92 L68 94 L86 104 L94 114 L86 143 L39 143Z" fill="#3a302e"/>
  <path d="M39 108 L46 98 L56 96 L52 143 L39 143Z" fill="#66666e"/>
  <path d="M43 110 L56 94 L58 98 L46 116Z" fill="#e6e6e8"/>
  <path d="M60 100 L66 143 M70 100 L74 143" stroke="#5a4c48" stroke-width="1" fill="none"/>
  <!-- natsu chest -->
  <path d="M74 108 L92 104 L108 106 L116 143 L72 143Z" fill="#f2e8e0"/>
  <path d="M72 110 L90 108 L84 143 L72 143Z" fill="#c09a84"/>
  <path d="M86 110 L102 114 L104 128 L98 140 L90 134 L84 124Z" fill="#c1432f"/>
  <!-- dusky hand region -->
  <path d="M104 86 L128 84 L136 96 L136 143 L116 143 L108 120Z" fill="#b48a72"/>
  <path d="M120 90 L126 130 M128 88 L132 120" stroke="#d8a848" stroke-width="1.2" fill="none"/>
  <!-- hand -->
  <path d="M98 96 L106 84 L118 88 L116 104 L112 120 L102 116Z" fill="#e3b2b0"/>
  <path d="M106 86 L114 92 L110 112" stroke="#f6dada" stroke-width="2" fill="none"/>
  <!-- lucy shoulder -->
  <path d="M138 136 L139 96 L146 86 L160 84 L167 92 L167 128 L152 136Z" fill="#bc8e72"/>
  <path d="M142 130 L143 96 L150 89 L162 90 L165 122 L154 130Z" fill="#f2e2d2"/>
  <path d="M156 108 L164 106 L166 124 L158 126Z" fill="#a87a60"/>
  <!-- blue clothing -->
  <path d="M128 120 L140 124 L152 128 L164 118 L174 112 L176 143 L128 143Z" fill="#a8c6e6"/>
  <path d="M132 128 L150 134 L164 122 L168 130 L152 142 L134 138Z" fill="#dcb042"/>
  <!-- right ponytail -->
  <path d="M162 72 L172 80 L180 90 L186 110 L182 114 L174 100 L166 88Z" fill="#d3a24a"/>
  </g>
  <!-- sparkles -->
  <g fill="#fffbe8" opacity="0.9">
    <circle cx="213" cy="101" r="1.2"/><circle cx="220" cy="88" r="1"/><circle cx="236" cy="86" r="1.3"/><circle cx="245" cy="97" r="1"/>
    <circle cx="195" cy="48" r="0.9"/><circle cx="232" cy="58" r="1"/><circle cx="210" cy="110" r="1"/><circle cx="230" cy="118" r="1.2"/>
  </g>
  <!-- text -->
  <text x="4" y="13" font-family="Liberation Sans" font-size="10" font-weight="bold" fill="#fff" opacity="0.55" letter-spacing="1.6">FAIRY TAIL END</text>
  <text x="4" y="22" font-family="Liberation Sans" font-size="5.5" fill="#fff" opacity="0.45" letter-spacing="0.5">ANIMATION 2018</text>
</svg>
<div class="abs" style="left:0;top:0;width:256px;height:143px;border:1px solid rgba(255,255,255,0.85);border-radius:4px"></div>
</div>

<div id="bottombar" class="abs"></div>
<div class="abs" style="left:239px;top:717px;width:34px;height:3px;background:#5a5a5a"></div>
</body></html>
